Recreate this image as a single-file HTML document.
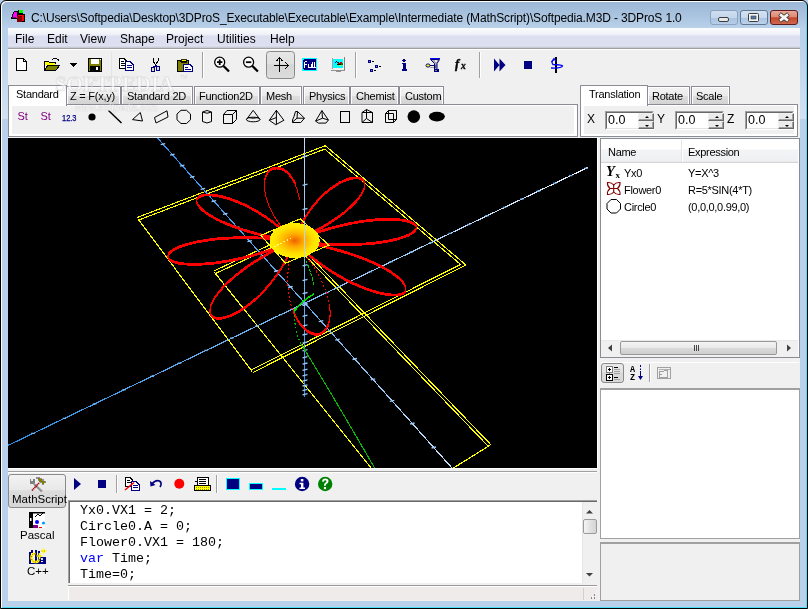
<!DOCTYPE html>
<html><head><meta charset="utf-8">
<style>
*{margin:0;padding:0;box-sizing:border-box}
html,body{width:808px;height:609px;overflow:hidden;background:#b9d1ea}
body{position:relative;will-change:transform;font-family:"Liberation Sans",sans-serif;font-size:11px;color:#000}
.a{position:absolute}
.t{position:absolute;white-space:nowrap;line-height:1}
#frame{left:0;top:0;width:808px;height:609px;border:1px solid #000;border-radius:6px 6px 0 0;box-shadow:inset 1px 1px 0 #fff,inset -1px -1px 0 #48dff7;
 background:linear-gradient(#9bb7d6 0px,#a9c3df 14px,#b9d1ea 27px,#b9d1ea 118px,#b9d1ea 609px)}
#content{left:8px;top:28px;width:792px;height:573px;background:#f0f0f0}
#menu{left:8px;top:28px;width:792px;height:20px;background:linear-gradient(#fdfdfe 0px,#eceff7 7px,#dcdfef 8px,#dcdfef 17px,#e3e6f3 18px,#c8cad6 19px)}
.menut{font-size:12px;top:33px}
.tab{position:absolute;border:1px solid #898c95;border-bottom:none;background:linear-gradient(#f3f3f3,#ececec 50%,#dfdfdf 51%,#d3d3d3);border-radius:1px 1px 0 0;box-shadow:inset 1px 1px 0 #fff,inset -1px 0 0 #fff}
.tab.act{background:#fff;box-shadow:none}
.tabt{position:absolute;white-space:nowrap;line-height:1;font-size:11px;letter-spacing:-0.25px}
.panel{position:absolute;border:1px solid #898c95;background:#fff}
</style></head>
<body>
<div id="frame" class="a"></div>
<div class="a" style="left:2px;top:40px;width:6px;height:79px;background:linear-gradient(#b9d1ea,#c8dbf0 60%,#d2e2f3)"></div>
<div class="a" style="left:800px;top:40px;width:6px;height:79px;background:linear-gradient(#b9d1ea,#c8dbf0 60%,#d2e2f3)"></div>
<div id="content" class="a"></div>
<div id="menu" class="a"></div>
<div class="a" style="left:8px;top:48px;width:792px;height:1px;background:#a0a0a0"></div>
<div class="a" style="left:8px;top:49px;width:792px;height:1px;background:#fff"></div>

<!-- title -->
<div class="t" id="title" style="left:31px;top:12px;font-size:12px;letter-spacing:-0.135px">C:\Users\Softpedia\Desktop\3DProS_Executable\Executable\Example\Intermediate (MathScript)\Softpedia.M3D - 3DProS 1.0</div>

<!-- menu -->
<div class="t menut" style="left:15px">File</div>
<div class="t menut" style="left:47px">Edit</div>
<div class="t menut" style="left:80px">View</div>
<div class="t menut" style="left:120px">Shape</div>
<div class="t menut" style="left:166px">Project</div>
<div class="t menut" style="left:217px">Utilities</div>
<div class="t menut" style="left:270px">Help</div>

<!-- left tab control -->
<div class="panel" style="left:8px;top:104px;width:570px;height:33px"></div>
<div class="a" style="left:12px;top:106px;width:562px;height:28px;background:#f0f0f0"></div>
<div class="tab" style="left:66px;top:86px;width:55px;height:18px"></div>
<div class="tab" style="left:121px;top:86px;width:72px;height:18px"></div>
<div class="tab" style="left:194px;top:86px;width:66px;height:18px"></div>
<div class="tab" style="left:260px;top:86px;width:42px;height:18px"></div>
<div class="tab" style="left:303px;top:86px;width:47px;height:18px"></div>
<div class="tab" style="left:350px;top:86px;width:49px;height:18px"></div>
<div class="tab" style="left:399px;top:86px;width:45px;height:18px"></div>
<div class="tab act" style="left:8px;top:85px;width:59px;height:21px"></div>
<div class="tabt" style="left:16px;top:89px">Standard</div>
<div class="tabt" style="left:70px;top:91px">Z = F(x,y)</div>
<div class="tabt" style="left:127px;top:91px">Standard 2D</div>
<div class="tabt" style="left:199px;top:91px">Function2D</div>
<div class="tabt" style="left:266px;top:91px">Mesh</div>
<div class="tabt" style="left:309px;top:91px">Physics</div>
<div class="tabt" style="left:356px;top:91px">Chemist</div>
<div class="tabt" style="left:405px;top:91px">Custom</div>

<!-- right tab control -->
<div class="panel" style="left:580px;top:104px;width:218px;height:33px"></div>
<div class="a" style="left:584px;top:106px;width:210px;height:28px;background:#f0f0f0"></div>
<div class="tab" style="left:647px;top:86px;width:43px;height:18px"></div>
<div class="tab" style="left:691px;top:86px;width:39px;height:18px"></div>
<div class="tab act" style="left:580px;top:85px;width:68px;height:21px"></div>
<div class="tabt" style="left:589px;top:89px">Translation</div>
<div class="tabt" style="left:652px;top:91px">Rotate</div>
<div class="tabt" style="left:696px;top:91px">Scale</div>

<!-- 3D view -->
<div class="a" id="view" style="left:8px;top:138px;width:589px;height:330px;background:#000"></div>

<!-- right list -->
<div class="panel" style="left:600px;top:138px;width:200px;height:220px"></div>

<!--SCENE--><svg class="a" style="left:8px;top:138px" width="589" height="330" viewBox="0 0 589 330" shape-rendering="crispEdges"><defs>
<linearGradient id="gAx1" gradientUnits="userSpaceOnUse" x1="149" y1="0" x2="444" y2="330"><stop offset="0" stop-color="#2f8ef0"/><stop offset="0.5" stop-color="#6aaae8"/><stop offset="1" stop-color="#c8e0f8"/></linearGradient>
<linearGradient id="gAx2" gradientUnits="userSpaceOnUse" x1="0" y1="307" x2="580" y2="29"><stop offset="0" stop-color="#2a8ee8"/><stop offset="0.5" stop-color="#78b4ec"/><stop offset="1" stop-color="#e8f2ff"/></linearGradient>
<linearGradient id="gAx3" gradientUnits="userSpaceOnUse" x1="0" y1="0" x2="0" y2="258"><stop offset="0" stop-color="#c0dcf8"/><stop offset="1" stop-color="#2f8ef0"/></linearGradient>
<radialGradient id="gBall" cx="0.5" cy="0.5" r="0.5"><stop offset="0" stop-color="#f06000"/><stop offset="0.35" stop-color="#ffa800"/><stop offset="0.75" stop-color="#ffe000"/><stop offset="1" stop-color="#fff000"/></radialGradient>
</defs>
<path d="M129.3,79.4 L317.3,7.7 L457.9,127.0 L244.7,234.6" fill="none" stroke="#ffff00" stroke-width="1.1" />
<path d="M130.3,82.2 L316.7,11.1 L452.5,126.4 L243.3,232.0" fill="none" stroke="#ffff00" stroke-width="1.1" />
<line x1="244.0" y1="233.3" x2="129.8" y2="80.8" stroke="#ffff00" stroke-width="1.2" />
<path d="M205.9,132.9 L273.4,101.6" fill="none" stroke="#ffff00" stroke-width="1.1" />
<path d="M207.1,135.7 L274.6,104.4" fill="none" stroke="#ffff00" stroke-width="1.1" />
<path d="M293.1,109.0 L482.7,306.5" fill="none" stroke="#ffff00" stroke-width="1.1" />
<path d="M290.9,111.0 L480.5,308.5" fill="none" stroke="#ffff00" stroke-width="1.1" />
<line x1="481.6" y1="307.5" x2="445.4" y2="330.0" stroke="#ffff00" stroke-width="1.2" />
<line x1="206.5" y1="134.3" x2="363.1" y2="330.0" stroke="#ffff00" stroke-width="1.2" />
<line x1="149.5" y1="0.0" x2="444.0" y2="330.0" stroke="url(#gAx1)" stroke-width="1.2" />
<line x1="0.0" y1="307.4" x2="579.7" y2="29.5" stroke="url(#gAx2)" stroke-width="1.2" />
<line x1="296.5" y1="0.0" x2="296.5" y2="258.5" stroke="url(#gAx3)" stroke-width="1.2" />
<g shape-rendering="auto"><path d="M152.7 6.6 L157.2 5.6" stroke="#9cc8f4" stroke-width="1.3"/><path d="M162.1 17.1 L166.6 16.1" stroke="#9cc8f4" stroke-width="1.3"/><path d="M171.9 28.1 L176.4 27.1" stroke="#9cc8f4" stroke-width="1.3"/><path d="M182.0 39.4 L186.5 38.4" stroke="#9cc8f4" stroke-width="1.3"/><path d="M192.6 51.3 L197.1 50.3" stroke="#9cc8f4" stroke-width="1.3"/><path d="M203.6 63.6 L208.1 62.6" stroke="#9cc8f4" stroke-width="1.3"/><path d="M215.0 76.4 L219.5 75.4" stroke="#9cc8f4" stroke-width="1.3"/><path d="M226.9 89.8 L231.4 88.8" stroke="#9cc8f4" stroke-width="1.3"/><path d="M239.4 103.7 L243.9 102.7" stroke="#9cc8f4" stroke-width="1.3"/><path d="M252.4 118.3 L256.9 117.3" stroke="#9cc8f4" stroke-width="1.3"/><path d="M266.0 133.5 L270.5 132.5" stroke="#9cc8f4" stroke-width="1.3"/><path d="M280.2 149.5 L284.7 148.5" stroke="#9cc8f4" stroke-width="1.3"/><path d="M295.1 166.2 L299.6 165.2" stroke="#9cc8f4" stroke-width="1.3"/><path d="M310.8 183.7 L315.3 182.7" stroke="#9cc8f4" stroke-width="1.3"/><path d="M327.2 202.1 L331.7 201.1" stroke="#9cc8f4" stroke-width="1.3"/><path d="M344.5 221.5 L349.0 220.5" stroke="#9cc8f4" stroke-width="1.3"/><path d="M362.7 241.9 L367.2 240.9" stroke="#9cc8f4" stroke-width="1.3"/><path d="M381.8 263.3 L386.3 262.3" stroke="#9cc8f4" stroke-width="1.3"/><path d="M402.1 286.0 L406.6 285.0" stroke="#9cc8f4" stroke-width="1.3"/><path d="M423.5 310.0 L428.0 309.0" stroke="#9cc8f4" stroke-width="1.3"/><path d="M294.5 19.0 L299.5 17.8" stroke="#9cc8f4" stroke-width="1.3"/><path d="M294.5 47.3 L299.5 46.1" stroke="#9cc8f4" stroke-width="1.3"/><path d="M294.5 71.7 L299.5 70.5" stroke="#9cc8f4" stroke-width="1.3"/><path d="M294.5 92.9 L299.5 91.7" stroke="#9cc8f4" stroke-width="1.3"/><path d="M294.5 111.5 L299.5 110.3" stroke="#9cc8f4" stroke-width="1.3"/><path d="M294.5 127.9 L299.5 126.7" stroke="#9cc8f4" stroke-width="1.3"/><path d="M294.5 142.6 L299.5 141.4" stroke="#9cc8f4" stroke-width="1.3"/><path d="M294.5 155.7 L299.5 154.5" stroke="#9cc8f4" stroke-width="1.3"/><path d="M294.5 167.6 L299.5 166.4" stroke="#9cc8f4" stroke-width="1.3"/><path d="M294.5 178.3 L299.5 177.1" stroke="#9cc8f4" stroke-width="1.3"/><path d="M294.5 188.1 L299.5 186.9" stroke="#9cc8f4" stroke-width="1.3"/><path d="M294.5 197.0 L299.5 195.8" stroke="#9cc8f4" stroke-width="1.3"/><path d="M294.5 205.2 L299.5 204.0" stroke="#9cc8f4" stroke-width="1.3"/><path d="M294.5 212.8 L299.5 211.6" stroke="#9cc8f4" stroke-width="1.3"/><path d="M294.5 219.8 L299.5 218.6" stroke="#9cc8f4" stroke-width="1.3"/><path d="M294.5 226.2 L299.5 225.0" stroke="#9cc8f4" stroke-width="1.3"/><path d="M294.5 232.3 L299.5 231.1" stroke="#9cc8f4" stroke-width="1.3"/><path d="M294.5 237.9 L299.5 236.7" stroke="#9cc8f4" stroke-width="1.3"/><path d="M294.5 243.1 L299.5 241.9" stroke="#9cc8f4" stroke-width="1.3"/><path d="M294.5 248.0 L299.5 246.8" stroke="#9cc8f4" stroke-width="1.3"/><path d="M294.5 252.6 L299.5 251.4" stroke="#9cc8f4" stroke-width="1.3"/><path d="M294.5 256.9 L299.5 255.7" stroke="#9cc8f4" stroke-width="1.3"/><path d="M23.2 295.4 L26.8 295.4" stroke="#7ab8f0" stroke-width="1.3"/><path d="M54.6 280.4 L58.1 280.4" stroke="#7ab8f0" stroke-width="1.3"/><path d="M84.9 265.9 L88.4 265.9" stroke="#7ab8f0" stroke-width="1.3"/><path d="M114.2 251.8 L117.7 251.8" stroke="#7ab8f0" stroke-width="1.3"/><path d="M142.5 238.3 L146.0 238.3" stroke="#7ab8f0" stroke-width="1.3"/><path d="M169.8 225.1 L173.3 225.1" stroke="#7ab8f0" stroke-width="1.3"/><path d="M196.3 212.4 L199.8 212.4" stroke="#7ab8f0" stroke-width="1.3"/><path d="M222.0 200.1 L225.5 200.1" stroke="#7ab8f0" stroke-width="1.3"/><path d="M246.9 188.2 L250.4 188.2" stroke="#7ab8f0" stroke-width="1.3"/><path d="M271.0 176.6 L274.5 176.6" stroke="#7ab8f0" stroke-width="1.3"/><path d="M294.4 165.4 L297.9 165.4" stroke="#7ab8f0" stroke-width="1.3"/><path d="M317.1 154.5 L320.6 154.5" stroke="#7ab8f0" stroke-width="1.3"/><path d="M339.1 144.0 L342.6 144.0" stroke="#7ab8f0" stroke-width="1.3"/><path d="M360.6 133.7 L364.1 133.7" stroke="#7ab8f0" stroke-width="1.3"/><path d="M381.4 123.7 L384.9 123.7" stroke="#7ab8f0" stroke-width="1.3"/><path d="M401.6 114.0 L405.1 114.0" stroke="#7ab8f0" stroke-width="1.3"/><path d="M421.2 104.6 L424.7 104.6" stroke="#7ab8f0" stroke-width="1.3"/><path d="M440.4 95.4 L443.9 95.4" stroke="#7ab8f0" stroke-width="1.3"/><path d="M459.0 86.5 L462.5 86.5" stroke="#7ab8f0" stroke-width="1.3"/><path d="M477.1 77.8 L480.6 77.8" stroke="#7ab8f0" stroke-width="1.3"/><path d="M494.8 69.4 L498.3 69.4" stroke="#7ab8f0" stroke-width="1.3"/><path d="M512.0 61.1 L515.5 61.1" stroke="#7ab8f0" stroke-width="1.3"/><path d="M528.7 53.1 L532.2 53.1" stroke="#7ab8f0" stroke-width="1.3"/><path d="M545.0 45.3 L548.5 45.3" stroke="#7ab8f0" stroke-width="1.3"/><path d="M561.0 37.6 L564.5 37.6" stroke="#7ab8f0" stroke-width="1.3"/><path d="M576.5 30.2 L580.0 30.2" stroke="#7ab8f0" stroke-width="1.3"/></g>
<path d="M286.2,104.0 L284.9,102.7 L283.6,101.3 L282.3,99.9 L281.1,98.5 L279.9,97.1 L278.7,95.7 L277.6,94.3 L276.5,93.0 L275.4,91.6 L274.3,90.2 L273.3,88.8 L272.3,87.5 L271.3,86.1 L270.4,84.7 L269.5,83.4 L268.6,82.0 L267.8,80.7 L267.0,79.4 L266.2,78.1 L265.5,76.7 L264.7,75.4 L264.1,74.1 L263.4,72.9 L262.8,71.6 L262.2,70.3 L261.6,69.1 L261.1,67.9 L260.6,66.6 L260.1,65.4 L259.7,64.2 L259.2,63.1 L258.9,61.9 L258.5,60.8 L258.2,59.6 L257.9,58.5 L257.6,57.4 L257.4,56.4 L257.2,55.3 L257.0,54.3 L256.8,53.2 L256.7,52.2 L256.6,51.3 L256.5,50.3 L256.4,49.3 L256.4,48.4 L256.4,47.5 L256.4,46.6 L256.5,45.8 L256.5,44.9 L256.6,44.1 L256.7,43.3 L256.9,42.6 L257.0,41.8 L257.2,41.1 L257.4,40.4 L257.6,39.7 L257.9,39.1 L258.1,38.4 L258.4,37.8 L258.7,37.2 L259.0,36.7 L259.4,36.2 L259.7,35.6 L260.1,35.2 L260.5,34.7 L260.9,34.3 L261.3,33.9 L261.7,33.5 L262.1,33.1 L262.6,32.8 L263.0,32.5 L263.5,32.2 L264.0,32.0 L264.5,31.8 L265.0,31.6 L265.5,31.4 L266.0,31.3 L266.6,31.1 L267.1,31.1 L267.7,31.0 L268.2,31.0 L268.8,30.9 L269.3,31.0 L269.9,31.0 L270.5,31.1 L271.1,31.2 L271.6,31.3 L272.2,31.5 L272.8,31.7 L273.4,31.9 L274.0,32.1 L274.6,32.4 L275.2,32.7 L275.8,33.0 L276.3,33.3 L276.9,33.7 L277.5,34.1 L278.1,34.5 L278.7,35.0 L279.2,35.5 L279.8,36.0 L280.3,36.5 L280.9,37.1 L281.4,37.7 L282.0,38.3 L282.5,38.9 L283.0,39.6 L283.5,40.3 L284.0,41.0 L284.5,41.8 L285.0,42.5 L285.5,43.3 L285.9,44.2 L286.4,45.0 L286.8,45.9 L287.2,46.8 L287.6,47.7 L288.0,48.6 L288.4,49.6 L288.7,50.6 L289.1,51.6 L289.4,52.7 L289.7,53.7 L290.0,54.8 L290.3,55.9 L290.5,57.0 L290.8,58.2 L291.0,59.4 L291.2,60.6 L291.4,61.8" fill="none" stroke="#ff0000" stroke-width="1.0" stroke-linejoin="round"/>
<path d="M290.4,88.3 L290.1,89.8 L289.7,91.4 L289.4,92.9 L289.0,94.5 L288.6,96.1 L288.2,97.6 L287.7,99.2 L287.2,100.8 L286.7,102.4 L286.2,104.0" fill="none" stroke="#ff0000" stroke-width="1.0" stroke-linejoin="round"/>
<path d="M256.5,49.4 L256.4,48.4 L256.4,47.5 L256.4,46.6 L256.4,45.7 L256.5,44.9 L256.5,44.0 L256.6,43.2 L256.7,42.4 L256.9,41.7 L257.0,40.9 L257.2,40.2 L257.4,39.5 L257.6,38.8 L257.9,38.2 L258.1,37.5 L258.4,36.9 L258.7,36.3 L259.0,35.8 L259.4,35.3 L259.7,34.7 L260.1,34.3 L260.5,33.8 L260.9,33.4 L261.3,33.0 L261.7,32.6 L262.1,32.2 L262.6,31.9 L263.0,31.6 L263.5,31.3 L264.0,31.1 L264.5,30.9 L265.0,30.7 L265.5,30.5 L266.0,30.4 L266.6,30.2 L267.1,30.2 L267.7,30.1 L268.2,30.1 L268.8,30.0 L269.3,30.1 L269.9,30.1 L270.5,30.2 L271.1,30.3 L271.6,30.4 L272.2,30.6 L272.8,30.8 L273.4,31.0 L274.0,31.2 L274.6,31.5 L275.2,31.8 L275.8,32.1 L276.3,32.4 L276.9,32.8 L277.5,33.2 L278.1,33.6 L278.7,34.1 L279.2,34.6 L279.8,35.1 L280.3,35.6 L280.9,36.2 L281.4,36.8 L282.0,37.4 L282.5,38.0 L283.0,38.7 L283.5,39.4 L284.0,40.1 L284.5,40.9 L285.0,41.6 L285.5,42.4 L285.9,43.3 L286.4,44.1 L286.8,45.0 L287.2,45.9" fill="none" stroke="#ff0000" stroke-width="1.0" stroke-linejoin="round"/>
<path d="M256.5,48.5 L256.4,47.5 L256.4,46.6 L256.4,45.7 L256.4,44.8 L256.5,44.0 L256.5,43.1 L256.6,42.3 L256.7,41.5 L256.9,40.8 L257.0,40.0 L257.2,39.3 L257.4,38.6 L257.6,37.9 L257.9,37.3 L258.1,36.6 L258.4,36.0 L258.7,35.4 L259.0,34.9 L259.4,34.4 L259.7,33.8 L260.1,33.4 L260.5,32.9 L260.9,32.5 L261.3,32.1 L261.7,31.7 L262.1,31.3 L262.6,31.0 L263.0,30.7 L263.5,30.4 L264.0,30.2 L264.5,30.0 L265.0,29.8 L265.5,29.6 L266.0,29.5 L266.6,29.3 L267.1,29.3 L267.7,29.2 L268.2,29.2 L268.8,29.1 L269.3,29.2 L269.9,29.2 L270.5,29.3 L271.1,29.4 L271.6,29.5 L272.2,29.7 L272.8,29.9 L273.4,30.1 L274.0,30.3 L274.6,30.6 L275.2,30.9 L275.8,31.2 L276.3,31.5 L276.9,31.9 L277.5,32.3 L278.1,32.7 L278.7,33.2 L279.2,33.7 L279.8,34.2 L280.3,34.7 L280.9,35.3 L281.4,35.9 L282.0,36.5 L282.5,37.1 L283.0,37.8 L283.5,38.5 L284.0,39.2 L284.5,40.0 L285.0,40.7 L285.5,41.5 L285.9,42.4 L286.4,43.2 L286.8,44.1 L287.2,45.0" fill="none" stroke="#ff0000" stroke-width="1.0" stroke-linejoin="round"/>
<path d="M286.2,104.0 L286.7,102.4 L287.3,100.8 L287.9,99.3 L288.5,97.7 L289.2,96.1 L289.8,94.6 L290.5,93.1 L291.2,91.6 L292.0,90.1 L292.7,88.6 L293.4,87.1 L294.2,85.7 L295.0,84.3 L295.8,82.8 L296.6,81.5 L297.4,80.1 L298.3,78.7 L299.1,77.4 L300.0,76.1 L300.9,74.8 L301.8,73.5 L302.7,72.3 L303.6,71.0 L304.5,69.8 L305.5,68.6 L306.4,67.5 L307.3,66.3 L308.3,65.2 L309.3,64.1 L310.2,63.0 L311.2,62.0 L312.2,61.0 L313.2,60.0 L314.2,59.0 L315.1,58.0 L316.1,57.1 L317.1,56.2 L318.1,55.3 L319.1,54.5 L320.1,53.7 L321.1,52.8 L322.1,52.1 L323.1,51.3 L324.1,50.6 L325.1,49.9 L326.1,49.2 L327.0,48.6 L328.0,47.9 L329.0,47.3 L329.9,46.8 L330.9,46.2 L331.8,45.7 L332.8,45.2 L333.7,44.8 L334.6,44.3 L335.5,43.9 L336.4,43.5 L337.3,43.1 L338.2,42.8 L339.0,42.5 L339.9,42.2 L340.7,42.0 L341.6,41.7 L342.4,41.5 L343.1,41.3 L343.9,41.2 L344.7,41.0 L345.4,40.9 L346.1,40.9 L346.8,40.8 L347.5,40.8 L348.2,40.8 L348.8,40.8 L349.4,40.8 L350.0,40.9 L350.6,41.0 L351.2,41.1 L351.7,41.3 L352.2,41.4 L352.7,41.6 L353.2,41.8 L353.6,42.1 L354.0,42.3 L354.4,42.6 L354.7,42.9 L355.1,43.3 L355.4,43.6 L355.6,44.0 L355.9,44.4 L356.1,44.8 L356.2,45.3 L356.4,45.7 L356.5,46.2 L356.6,46.7 L356.7,47.2 L356.7,47.8 L356.7,48.3 L356.6,48.9 L356.5,49.5 L356.4,50.1 L356.3,50.8 L356.1,51.4 L355.9,52.1 L355.6,52.8 L355.4,53.5 L355.0,54.2 L354.7,55.0 L354.3,55.7 L353.8,56.5 L353.4,57.3 L352.9,58.1 L352.3,58.9 L351.7,59.7 L351.1,60.6 L350.5,61.4 L349.8,62.3 L349.0,63.2 L348.3,64.1 L347.5,65.0 L346.6,65.9 L345.7,66.8 L344.8,67.7 L343.8,68.7 L342.8,69.6 L341.8,70.6 L340.7,71.5 L339.6,72.5 L338.5,73.5 L337.3,74.5 L336.1,75.5 L334.8,76.5 L333.5,77.5 L332.1,78.5 L330.8,79.5 L329.4,80.5 L327.9,81.5 L326.4,82.5 L324.9,83.5 L323.4,84.5 L321.8,85.6 L320.2,86.6 L318.5,87.6 L316.9,88.6 L315.1,89.6 L313.4,90.6 L311.6,91.6 L309.8,92.6 L308.0,93.6 L306.1,94.6 L304.2,95.6 L302.3,96.5 L300.4,97.5 L298.4,98.5 L296.4,99.4 L294.4,100.4 L292.4,101.3 L290.3,102.2 L288.3,103.1 L286.2,104.0" fill="none" stroke="#ff0000" stroke-width="1.0" stroke-linejoin="round"/>
<path d="M286.2,103.1 L286.7,101.5 L287.3,99.9 L287.9,98.4 L288.5,96.8 L289.2,95.2 L289.8,93.7 L290.5,92.2 L291.2,90.7 L292.0,89.2 L292.7,87.7 L293.4,86.2 L294.2,84.8 L295.0,83.4 L295.8,81.9 L296.6,80.6 L297.4,79.2 L298.3,77.8 L299.1,76.5 L300.0,75.2 L300.9,73.9 L301.8,72.6 L302.7,71.4 L303.6,70.1 L304.5,68.9 L305.5,67.7 L306.4,66.6 L307.3,65.4 L308.3,64.3 L309.3,63.2 L310.2,62.1 L311.2,61.1 L312.2,60.1 L313.2,59.1 L314.2,58.1 L315.1,57.1 L316.1,56.2 L317.1,55.3 L318.1,54.4 L319.1,53.6 L320.1,52.8 L321.1,51.9 L322.1,51.2 L323.1,50.4 L324.1,49.7 L325.1,49.0 L326.1,48.3 L327.0,47.7 L328.0,47.0 L329.0,46.4 L329.9,45.9 L330.9,45.3 L331.8,44.8 L332.8,44.3 L333.7,43.9 L334.6,43.4 L335.5,43.0 L336.4,42.6 L337.3,42.2 L338.2,41.9 L339.0,41.6 L339.9,41.3 L340.7,41.1 L341.6,40.8 L342.4,40.6 L343.1,40.4 L343.9,40.3 L344.7,40.1 L345.4,40.0 L346.1,40.0 L346.8,39.9 L347.5,39.9 L348.2,39.9 L348.8,39.9 L349.4,39.9 L350.0,40.0 L350.6,40.1 L351.2,40.2 L351.7,40.4 L352.2,40.5 L352.7,40.7 L353.2,40.9 L353.6,41.2 L354.0,41.4 L354.4,41.7 L354.7,42.0 L355.1,42.4 L355.4,42.7 L355.6,43.1 L355.9,43.5 L356.1,43.9 L356.2,44.4 L356.4,44.8 L356.5,45.3 L356.6,45.8 L356.7,46.3 L356.7,46.9 L356.7,47.4 L356.6,48.0 L356.5,48.6 L356.4,49.2 L356.3,49.9 L356.1,50.5 L355.9,51.2 L355.6,51.9 L355.4,52.6 L355.0,53.3 L354.7,54.1 L354.3,54.8 L353.8,55.6 L353.4,56.4 L352.9,57.2 L352.3,58.0 L351.7,58.8 L351.1,59.7 L350.5,60.5 L349.8,61.4 L349.0,62.3 L348.3,63.2 L347.5,64.1 L346.6,65.0 L345.7,65.9 L344.8,66.8 L343.8,67.8 L342.8,68.7 L341.8,69.7 L340.7,70.6 L339.6,71.6 L338.5,72.6 L337.3,73.6 L336.1,74.6 L334.8,75.6 L333.5,76.6 L332.1,77.6 L330.8,78.6 L329.4,79.6 L327.9,80.6 L326.4,81.6 L324.9,82.6 L323.4,83.6 L321.8,84.7 L320.2,85.7 L318.5,86.7 L316.9,87.7 L315.1,88.7 L313.4,89.7 L311.6,90.7 L309.8,91.7 L308.0,92.7 L306.1,93.7 L304.2,94.7 L302.3,95.6 L300.4,96.6 L298.4,97.6 L296.4,98.5 L294.4,99.5 L292.4,100.4 L290.3,101.3 L288.3,102.2 L286.2,103.1" fill="none" stroke="#ff0000" stroke-width="1.0" stroke-linejoin="round"/>
<path d="M286.2,102.2 L286.7,100.6 L287.3,99.0 L287.9,97.5 L288.5,95.9 L289.2,94.3 L289.8,92.8 L290.5,91.3 L291.2,89.8 L292.0,88.3 L292.7,86.8 L293.4,85.3 L294.2,83.9 L295.0,82.5 L295.8,81.0 L296.6,79.7 L297.4,78.3 L298.3,76.9 L299.1,75.6 L300.0,74.3 L300.9,73.0 L301.8,71.7 L302.7,70.5 L303.6,69.2 L304.5,68.0 L305.5,66.8 L306.4,65.7 L307.3,64.5 L308.3,63.4 L309.3,62.3 L310.2,61.2 L311.2,60.2 L312.2,59.2 L313.2,58.2 L314.2,57.2 L315.1,56.2 L316.1,55.3 L317.1,54.4 L318.1,53.5 L319.1,52.7 L320.1,51.9 L321.1,51.0 L322.1,50.3 L323.1,49.5 L324.1,48.8 L325.1,48.1 L326.1,47.4 L327.0,46.8 L328.0,46.1 L329.0,45.5 L329.9,45.0 L330.9,44.4 L331.8,43.9 L332.8,43.4 L333.7,43.0 L334.6,42.5 L335.5,42.1 L336.4,41.7 L337.3,41.3 L338.2,41.0 L339.0,40.7 L339.9,40.4 L340.7,40.2 L341.6,39.9 L342.4,39.7 L343.1,39.5 L343.9,39.4 L344.7,39.2 L345.4,39.1 L346.1,39.1 L346.8,39.0 L347.5,39.0 L348.2,39.0 L348.8,39.0 L349.4,39.0 L350.0,39.1 L350.6,39.2 L351.2,39.3 L351.7,39.5 L352.2,39.6 L352.7,39.8 L353.2,40.0 L353.6,40.3 L354.0,40.5 L354.4,40.8 L354.7,41.1 L355.1,41.5 L355.4,41.8 L355.6,42.2 L355.9,42.6 L356.1,43.0 L356.2,43.5 L356.4,43.9 L356.5,44.4 L356.6,44.9 L356.7,45.4 L356.7,46.0 L356.7,46.5 L356.6,47.1 L356.5,47.7 L356.4,48.3 L356.3,49.0 L356.1,49.6 L355.9,50.3 L355.6,51.0 L355.4,51.7 L355.0,52.4 L354.7,53.2 L354.3,53.9 L353.8,54.7 L353.4,55.5 L352.9,56.3 L352.3,57.1 L351.7,57.9 L351.1,58.8 L350.5,59.6 L349.8,60.5 L349.0,61.4 L348.3,62.3 L347.5,63.2 L346.6,64.1 L345.7,65.0 L344.8,65.9 L343.8,66.9 L342.8,67.8 L341.8,68.8 L340.7,69.7 L339.6,70.7 L338.5,71.7 L337.3,72.7 L336.1,73.7 L334.8,74.7 L333.5,75.7 L332.1,76.7 L330.8,77.7 L329.4,78.7 L327.9,79.7 L326.4,80.7 L324.9,81.7 L323.4,82.7 L321.8,83.8 L320.2,84.8 L318.5,85.8 L316.9,86.8 L315.1,87.8 L313.4,88.8 L311.6,89.8 L309.8,90.8 L308.0,91.8 L306.1,92.8 L304.2,93.8 L302.3,94.7 L300.4,95.7 L298.4,96.7 L296.4,97.6 L294.4,98.6 L292.4,99.5 L290.3,100.4 L288.3,101.3 L286.2,102.2" fill="none" stroke="#ff0000" stroke-width="1.0" stroke-linejoin="round"/>
<path d="M286.2,104.0 L288.3,103.2 L290.4,102.3 L292.5,101.4 L294.6,100.6 L296.8,99.8 L298.9,99.0 L301.0,98.2 L303.2,97.4 L305.3,96.6 L307.4,95.9 L309.6,95.2 L311.7,94.5 L313.9,93.8 L316.0,93.2 L318.1,92.5 L320.2,91.9 L322.4,91.3 L324.5,90.7 L326.6,90.1 L328.6,89.6 L330.7,89.1 L332.8,88.6 L334.9,88.1 L336.9,87.6 L338.9,87.2 L341.0,86.7 L343.0,86.3 L345.0,85.9 L346.9,85.6 L348.9,85.2 L350.8,84.9 L352.8,84.6 L354.7,84.3 L356.5,84.0 L358.4,83.8 L360.2,83.5 L362.0,83.3 L363.8,83.1 L365.6,82.9 L367.3,82.8 L369.1,82.6 L370.7,82.5 L372.4,82.4 L374.0,82.3 L375.6,82.3 L377.2,82.2 L378.8,82.2 L380.3,82.2 L381.7,82.2 L383.2,82.2 L384.6,82.2 L386.0,82.3 L387.3,82.3 L388.6,82.4 L389.9,82.5 L391.1,82.7 L392.3,82.8 L393.5,82.9 L394.6,83.1 L395.7,83.3 L396.7,83.5 L397.7,83.7 L398.7,83.9 L399.6,84.1 L400.5,84.4 L401.3,84.6 L402.1,84.9 L402.8,85.2 L403.5,85.5 L404.2,85.8 L404.8,86.1 L405.3,86.4 L405.8,86.7 L406.3,87.1 L406.7,87.4 L407.1,87.8 L407.4,88.1 L407.7,88.5 L407.9,88.9 L408.1,89.3 L408.2,89.7 L408.3,90.1 L408.3,90.5 L408.3,90.9 L408.2,91.3 L408.1,91.7 L407.9,92.2 L407.7,92.6 L407.4,93.0 L407.0,93.4 L406.7,93.9 L406.2,94.3 L405.7,94.7 L405.2,95.2 L404.6,95.6 L404.0,96.0 L403.3,96.5 L402.5,96.9 L401.8,97.3 L400.9,97.8 L400.0,98.2 L399.1,98.6 L398.1,99.0 L397.1,99.4 L396.0,99.8 L394.8,100.2 L393.6,100.6 L392.4,101.0 L391.1,101.4 L389.8,101.8 L388.4,102.1 L387.0,102.5 L385.6,102.8 L384.0,103.2 L382.5,103.5 L380.9,103.8 L379.3,104.1 L377.6,104.4 L375.9,104.7 L374.1,105.0 L372.3,105.2 L370.5,105.5 L368.6,105.7 L366.7,106.0 L364.8,106.2 L362.8,106.4 L360.8,106.6 L358.8,106.7 L356.7,106.9 L354.6,107.0 L352.5,107.1 L350.3,107.3 L348.1,107.3 L345.9,107.4 L343.7,107.5 L341.4,107.5 L339.1,107.6 L336.8,107.6 L334.5,107.6 L332.2,107.6 L329.8,107.5 L327.5,107.5 L325.1,107.4 L322.7,107.3 L320.3,107.2 L317.9,107.1 L315.5,107.0 L313.0,106.8 L310.6,106.6 L308.1,106.5 L305.7,106.3 L303.2,106.0 L300.8,105.8 L298.3,105.5 L295.9,105.3 L293.5,105.0 L291.0,104.7 L288.6,104.4 L286.2,104.0" fill="none" stroke="#ff0000" stroke-width="1.0" stroke-linejoin="round"/>
<path d="M286.2,103.1 L288.3,102.3 L290.4,101.4 L292.5,100.5 L294.6,99.7 L296.8,98.9 L298.9,98.1 L301.0,97.3 L303.2,96.5 L305.3,95.7 L307.4,95.0 L309.6,94.3 L311.7,93.6 L313.9,92.9 L316.0,92.3 L318.1,91.6 L320.2,91.0 L322.4,90.4 L324.5,89.8 L326.6,89.2 L328.6,88.7 L330.7,88.2 L332.8,87.7 L334.9,87.2 L336.9,86.7 L338.9,86.3 L341.0,85.8 L343.0,85.4 L345.0,85.0 L346.9,84.7 L348.9,84.3 L350.8,84.0 L352.8,83.7 L354.7,83.4 L356.5,83.1 L358.4,82.9 L360.2,82.6 L362.0,82.4 L363.8,82.2 L365.6,82.0 L367.3,81.9 L369.1,81.7 L370.7,81.6 L372.4,81.5 L374.0,81.4 L375.6,81.4 L377.2,81.3 L378.8,81.3 L380.3,81.3 L381.7,81.3 L383.2,81.3 L384.6,81.3 L386.0,81.4 L387.3,81.4 L388.6,81.5 L389.9,81.6 L391.1,81.8 L392.3,81.9 L393.5,82.0 L394.6,82.2 L395.7,82.4 L396.7,82.6 L397.7,82.8 L398.7,83.0 L399.6,83.2 L400.5,83.5 L401.3,83.7 L402.1,84.0 L402.8,84.3 L403.5,84.6 L404.2,84.9 L404.8,85.2 L405.3,85.5 L405.8,85.8 L406.3,86.2 L406.7,86.5 L407.1,86.9 L407.4,87.2 L407.7,87.6 L407.9,88.0 L408.1,88.4 L408.2,88.8 L408.3,89.2 L408.3,89.6 L408.3,90.0 L408.2,90.4 L408.1,90.8 L407.9,91.3 L407.7,91.7 L407.4,92.1 L407.0,92.5 L406.7,93.0 L406.2,93.4 L405.7,93.8 L405.2,94.3 L404.6,94.7 L404.0,95.1 L403.3,95.6 L402.5,96.0 L401.8,96.4 L400.9,96.9 L400.0,97.3 L399.1,97.7 L398.1,98.1 L397.1,98.5 L396.0,98.9 L394.8,99.3 L393.6,99.7 L392.4,100.1 L391.1,100.5 L389.8,100.9 L388.4,101.2 L387.0,101.6 L385.6,101.9 L384.0,102.3 L382.5,102.6 L380.9,102.9 L379.3,103.2 L377.6,103.5 L375.9,103.8 L374.1,104.1 L372.3,104.3 L370.5,104.6 L368.6,104.8 L366.7,105.1 L364.8,105.3 L362.8,105.5 L360.8,105.7 L358.8,105.8 L356.7,106.0 L354.6,106.1 L352.5,106.2 L350.3,106.4 L348.1,106.4 L345.9,106.5 L343.7,106.6 L341.4,106.6 L339.1,106.7 L336.8,106.7 L334.5,106.7 L332.2,106.7 L329.8,106.6 L327.5,106.6 L325.1,106.5 L322.7,106.4 L320.3,106.3 L317.9,106.2 L315.5,106.1 L313.0,105.9 L310.6,105.7 L308.1,105.6 L305.7,105.4 L303.2,105.1 L300.8,104.9 L298.3,104.6 L295.9,104.4 L293.5,104.1 L291.0,103.8 L288.6,103.5 L286.2,103.1" fill="none" stroke="#ff0000" stroke-width="1.0" stroke-linejoin="round"/>
<path d="M286.2,102.2 L288.3,101.4 L290.4,100.5 L292.5,99.6 L294.6,98.8 L296.8,98.0 L298.9,97.2 L301.0,96.4 L303.2,95.6 L305.3,94.8 L307.4,94.1 L309.6,93.4 L311.7,92.7 L313.9,92.0 L316.0,91.4 L318.1,90.7 L320.2,90.1 L322.4,89.5 L324.5,88.9 L326.6,88.3 L328.6,87.8 L330.7,87.3 L332.8,86.8 L334.9,86.3 L336.9,85.8 L338.9,85.4 L341.0,84.9 L343.0,84.5 L345.0,84.1 L346.9,83.8 L348.9,83.4 L350.8,83.1 L352.8,82.8 L354.7,82.5 L356.5,82.2 L358.4,82.0 L360.2,81.7 L362.0,81.5 L363.8,81.3 L365.6,81.1 L367.3,81.0 L369.1,80.8 L370.7,80.7 L372.4,80.6 L374.0,80.5 L375.6,80.5 L377.2,80.4 L378.8,80.4 L380.3,80.4 L381.7,80.4 L383.2,80.4 L384.6,80.4 L386.0,80.5 L387.3,80.5 L388.6,80.6 L389.9,80.7 L391.1,80.9 L392.3,81.0 L393.5,81.1 L394.6,81.3 L395.7,81.5 L396.7,81.7 L397.7,81.9 L398.7,82.1 L399.6,82.3 L400.5,82.6 L401.3,82.8 L402.1,83.1 L402.8,83.4 L403.5,83.7 L404.2,84.0 L404.8,84.3 L405.3,84.6 L405.8,84.9 L406.3,85.3 L406.7,85.6 L407.1,86.0 L407.4,86.3 L407.7,86.7 L407.9,87.1 L408.1,87.5 L408.2,87.9 L408.3,88.3 L408.3,88.7 L408.3,89.1 L408.2,89.5 L408.1,89.9 L407.9,90.4 L407.7,90.8 L407.4,91.2 L407.0,91.6 L406.7,92.1 L406.2,92.5 L405.7,92.9 L405.2,93.4 L404.6,93.8 L404.0,94.2 L403.3,94.7 L402.5,95.1 L401.8,95.5 L400.9,96.0 L400.0,96.4 L399.1,96.8 L398.1,97.2 L397.1,97.6 L396.0,98.0 L394.8,98.4 L393.6,98.8 L392.4,99.2 L391.1,99.6 L389.8,100.0 L388.4,100.3 L387.0,100.7 L385.6,101.0 L384.0,101.4 L382.5,101.7 L380.9,102.0 L379.3,102.3 L377.6,102.6 L375.9,102.9 L374.1,103.2 L372.3,103.4 L370.5,103.7 L368.6,103.9 L366.7,104.2 L364.8,104.4 L362.8,104.6 L360.8,104.8 L358.8,104.9 L356.7,105.1 L354.6,105.2 L352.5,105.3 L350.3,105.5 L348.1,105.5 L345.9,105.6 L343.7,105.7 L341.4,105.7 L339.1,105.8 L336.8,105.8 L334.5,105.8 L332.2,105.8 L329.8,105.7 L327.5,105.7 L325.1,105.6 L322.7,105.5 L320.3,105.4 L317.9,105.3 L315.5,105.2 L313.0,105.0 L310.6,104.8 L308.1,104.7 L305.7,104.5 L303.2,104.2 L300.8,104.0 L298.3,103.7 L295.9,103.5 L293.5,103.2 L291.0,102.9 L288.6,102.6 L286.2,102.2" fill="none" stroke="#ff0000" stroke-width="1.0" stroke-linejoin="round"/>
<path d="M286.2,104.0 L288.6,104.4 L291.0,104.8 L293.4,105.1 L295.8,105.5 L298.2,105.9 L300.6,106.4 L303.0,106.8 L305.4,107.3 L307.7,107.8 L310.1,108.2 L312.4,108.7 L314.8,109.3 L317.1,109.8 L319.4,110.3 L321.7,110.9 L323.9,111.5 L326.2,112.1 L328.4,112.7 L330.6,113.3 L332.8,113.9 L335.0,114.5 L337.1,115.2 L339.2,115.8 L341.3,116.5 L343.4,117.2 L345.5,117.9 L347.5,118.6 L349.5,119.3 L351.4,120.0 L353.4,120.7 L355.3,121.5 L357.1,122.2 L359.0,123.0 L360.8,123.7 L362.5,124.5 L364.3,125.2 L366.0,126.0 L367.6,126.8 L369.3,127.5 L370.8,128.3 L372.4,129.1 L373.9,129.9 L375.4,130.7 L376.8,131.5 L378.2,132.3 L379.5,133.0 L380.8,133.8 L382.1,134.6 L383.3,135.4 L384.4,136.2 L385.6,137.0 L386.6,137.7 L387.7,138.5 L388.7,139.3 L389.6,140.0 L390.5,140.8 L391.3,141.5 L392.1,142.3 L392.8,143.0 L393.5,143.7 L394.2,144.4 L394.7,145.1 L395.3,145.8 L395.8,146.5 L396.2,147.1 L396.6,147.8 L396.9,148.4 L397.2,149.0 L397.4,149.6 L397.6,150.2 L397.8,150.8 L397.8,151.3 L397.9,151.9 L397.8,152.4 L397.8,152.9 L397.6,153.3 L397.4,153.8 L397.2,154.2 L396.9,154.7 L396.6,155.0 L396.2,155.4 L395.8,155.8 L395.3,156.1 L394.8,156.4 L394.2,156.7 L393.6,156.9 L392.9,157.1 L392.2,157.3 L391.5,157.5 L390.6,157.6 L389.8,157.8 L388.9,157.8 L388.0,157.9 L387.0,157.9 L386.0,157.9 L384.9,157.9 L383.8,157.9 L382.7,157.8 L381.5,157.7 L380.3,157.5 L379.1,157.4 L377.8,157.2 L376.5,156.9 L375.1,156.7 L373.7,156.4 L372.3,156.1 L370.9,155.7 L369.4,155.4 L367.9,154.9 L366.4,154.5 L364.9,154.0 L363.3,153.5 L361.7,153.0 L360.1,152.5 L358.5,151.9 L356.9,151.3 L355.2,150.6 L353.5,149.9 L351.8,149.2 L350.1,148.5 L348.4,147.8 L346.7,147.0 L345.0,146.2 L343.2,145.3 L341.5,144.5 L339.7,143.6 L338.0,142.7 L336.2,141.8 L334.4,140.8 L332.7,139.8 L330.9,138.8 L329.2,137.8 L327.4,136.7 L325.7,135.7 L323.9,134.6 L322.2,133.5 L320.4,132.3 L318.7,131.2 L317.0,130.0 L315.3,128.9 L313.6,127.7 L311.9,126.4 L310.2,125.2 L308.6,124.0 L307.0,122.7 L305.3,121.4 L303.7,120.2 L302.2,118.9 L300.6,117.6 L299.0,116.2 L297.5,114.9 L296.0,113.6 L294.5,112.2 L293.1,110.9 L291.6,109.5 L290.2,108.2 L288.9,106.8 L287.5,105.4 L286.2,104.0" fill="none" stroke="#ff0000" stroke-width="1.0" stroke-linejoin="round"/>
<path d="M286.2,103.1 L288.6,103.5 L291.0,103.9 L293.4,104.2 L295.8,104.6 L298.2,105.0 L300.6,105.5 L303.0,105.9 L305.4,106.4 L307.7,106.9 L310.1,107.3 L312.4,107.8 L314.8,108.4 L317.1,108.9 L319.4,109.4 L321.7,110.0 L323.9,110.6 L326.2,111.2 L328.4,111.8 L330.6,112.4 L332.8,113.0 L335.0,113.6 L337.1,114.3 L339.2,114.9 L341.3,115.6 L343.4,116.3 L345.5,117.0 L347.5,117.7 L349.5,118.4 L351.4,119.1 L353.4,119.8 L355.3,120.6 L357.1,121.3 L359.0,122.1 L360.8,122.8 L362.5,123.6 L364.3,124.3 L366.0,125.1 L367.6,125.9 L369.3,126.6 L370.8,127.4 L372.4,128.2 L373.9,129.0 L375.4,129.8 L376.8,130.6 L378.2,131.4 L379.5,132.1 L380.8,132.9 L382.1,133.7 L383.3,134.5 L384.4,135.3 L385.6,136.1 L386.6,136.8 L387.7,137.6 L388.7,138.4 L389.6,139.1 L390.5,139.9 L391.3,140.6 L392.1,141.4 L392.8,142.1 L393.5,142.8 L394.2,143.5 L394.7,144.2 L395.3,144.9 L395.8,145.6 L396.2,146.2 L396.6,146.9 L396.9,147.5 L397.2,148.1 L397.4,148.7 L397.6,149.3 L397.8,149.9 L397.8,150.4 L397.9,151.0 L397.8,151.5 L397.8,152.0 L397.6,152.4 L397.4,152.9 L397.2,153.3 L396.9,153.8 L396.6,154.1 L396.2,154.5 L395.8,154.9 L395.3,155.2 L394.8,155.5 L394.2,155.8 L393.6,156.0 L392.9,156.2 L392.2,156.4 L391.5,156.6 L390.6,156.7 L389.8,156.9 L388.9,156.9 L388.0,157.0 L387.0,157.0 L386.0,157.0 L384.9,157.0 L383.8,157.0 L382.7,156.9 L381.5,156.8 L380.3,156.6 L379.1,156.5 L377.8,156.3 L376.5,156.0 L375.1,155.8 L373.7,155.5 L372.3,155.2 L370.9,154.8 L369.4,154.5 L367.9,154.0 L366.4,153.6 L364.9,153.1 L363.3,152.6 L361.7,152.1 L360.1,151.6 L358.5,151.0 L356.9,150.4 L355.2,149.7 L353.5,149.0 L351.8,148.3 L350.1,147.6 L348.4,146.9 L346.7,146.1 L345.0,145.3 L343.2,144.4 L341.5,143.6 L339.7,142.7 L338.0,141.8 L336.2,140.9 L334.4,139.9 L332.7,138.9 L330.9,137.9 L329.2,136.9 L327.4,135.8 L325.7,134.8 L323.9,133.7 L322.2,132.6 L320.4,131.4 L318.7,130.3 L317.0,129.1 L315.3,128.0 L313.6,126.8 L311.9,125.5 L310.2,124.3 L308.6,123.1 L307.0,121.8 L305.3,120.5 L303.7,119.3 L302.2,118.0 L300.6,116.7 L299.0,115.3 L297.5,114.0 L296.0,112.7 L294.5,111.3 L293.1,110.0 L291.6,108.6 L290.2,107.3 L288.9,105.9 L287.5,104.5 L286.2,103.1" fill="none" stroke="#ff0000" stroke-width="1.0" stroke-linejoin="round"/>
<path d="M286.2,102.2 L288.6,102.6 L291.0,103.0 L293.4,103.3 L295.8,103.7 L298.2,104.1 L300.6,104.6 L303.0,105.0 L305.4,105.5 L307.7,106.0 L310.1,106.4 L312.4,106.9 L314.8,107.5 L317.1,108.0 L319.4,108.5 L321.7,109.1 L323.9,109.7 L326.2,110.3 L328.4,110.9 L330.6,111.5 L332.8,112.1 L335.0,112.7 L337.1,113.4 L339.2,114.0 L341.3,114.7 L343.4,115.4 L345.5,116.1 L347.5,116.8 L349.5,117.5 L351.4,118.2 L353.4,118.9 L355.3,119.7 L357.1,120.4 L359.0,121.2 L360.8,121.9 L362.5,122.7 L364.3,123.4 L366.0,124.2 L367.6,125.0 L369.3,125.7 L370.8,126.5 L372.4,127.3 L373.9,128.1 L375.4,128.9 L376.8,129.7 L378.2,130.5 L379.5,131.2 L380.8,132.0 L382.1,132.8 L383.3,133.6 L384.4,134.4 L385.6,135.2 L386.6,135.9 L387.7,136.7 L388.7,137.5 L389.6,138.2 L390.5,139.0 L391.3,139.7 L392.1,140.5 L392.8,141.2 L393.5,141.9 L394.2,142.6 L394.7,143.3 L395.3,144.0 L395.8,144.7 L396.2,145.3 L396.6,146.0 L396.9,146.6 L397.2,147.2 L397.4,147.8 L397.6,148.4 L397.8,149.0 L397.8,149.5 L397.9,150.1 L397.8,150.6 L397.8,151.1 L397.6,151.5 L397.4,152.0 L397.2,152.4 L396.9,152.9 L396.6,153.2 L396.2,153.6 L395.8,154.0 L395.3,154.3 L394.8,154.6 L394.2,154.9 L393.6,155.1 L392.9,155.3 L392.2,155.5 L391.5,155.7 L390.6,155.8 L389.8,156.0 L388.9,156.0 L388.0,156.1 L387.0,156.1 L386.0,156.1 L384.9,156.1 L383.8,156.1 L382.7,156.0 L381.5,155.9 L380.3,155.7 L379.1,155.6 L377.8,155.4 L376.5,155.1 L375.1,154.9 L373.7,154.6 L372.3,154.3 L370.9,153.9 L369.4,153.6 L367.9,153.1 L366.4,152.7 L364.9,152.2 L363.3,151.7 L361.7,151.2 L360.1,150.7 L358.5,150.1 L356.9,149.5 L355.2,148.8 L353.5,148.1 L351.8,147.4 L350.1,146.7 L348.4,146.0 L346.7,145.2 L345.0,144.4 L343.2,143.5 L341.5,142.7 L339.7,141.8 L338.0,140.9 L336.2,140.0 L334.4,139.0 L332.7,138.0 L330.9,137.0 L329.2,136.0 L327.4,134.9 L325.7,133.9 L323.9,132.8 L322.2,131.7 L320.4,130.5 L318.7,129.4 L317.0,128.2 L315.3,127.1 L313.6,125.9 L311.9,124.6 L310.2,123.4 L308.6,122.2 L307.0,120.9 L305.3,119.6 L303.7,118.4 L302.2,117.1 L300.6,115.8 L299.0,114.4 L297.5,113.1 L296.0,111.8 L294.5,110.4 L293.1,109.1 L291.6,107.7 L290.2,106.4 L288.9,105.0 L287.5,103.6 L286.2,102.2" fill="none" stroke="#ff0000" stroke-width="1.0" stroke-linejoin="round"/>
<path d="M286.2,104.0 L287.5,105.4 L288.8,106.8 L290.1,108.2 L291.3,109.7 L292.6,111.1 L293.8,112.6 L295.0,114.0 L296.2,115.5 L297.4,117.0 L298.5,118.5 L299.6,120.0 L300.7,121.5 L301.8,123.0 L302.9,124.5 L303.9,126.0 L304.9,127.6 L305.9,129.1 L306.9,130.7 L307.8,132.2 L308.7,133.8 L309.6,135.3 L310.4,136.9 L311.3,138.4 L312.1,140.0 L312.8,141.5 L313.6,143.1 L314.3,144.6 L315.0,146.1 L315.6,147.7 L316.2,149.2 L316.8,150.7 L317.4,152.2 L317.9,153.7 L318.4,155.2 L318.9,156.7 L319.3,158.2 L319.7,159.6 L320.1,161.1 L320.4,162.5 L320.7,163.9 L321.0,165.3 L321.3,166.7" fill="none" stroke="#ff0000" stroke-width="1.1" stroke-dasharray="2 2"/>
<path d="M284.4,171.5 L283.9,170.2 L283.5,168.8 L283.1,167.4 L282.7,166.0 L282.3,164.5 L282.0,163.1 L281.7,161.6 L281.4,160.1 L281.1,158.5 L280.8,157.0 L280.6,155.4 L280.4,153.8 L280.2,152.3 L280.1,150.6 L279.9,149.0 L279.8,147.4 L279.8,145.8 L279.7,144.1 L279.7,142.5 L279.7,140.8 L279.7,139.1 L279.8,137.4 L279.9,135.8 L280.0,134.1 L280.1,132.4 L280.3,130.7 L280.4,129.0 L280.7,127.3 L280.9,125.6 L281.2,123.9 L281.4,122.2 L281.8,120.6 L282.1,118.9 L282.4,117.2 L282.8,115.5 L283.2,113.9 L283.7,112.2 L284.1,110.6 L284.6,108.9 L285.1,107.3 L285.6,105.7 L286.2,104.0" fill="none" stroke="#ff0000" stroke-width="1.1" stroke-dasharray="2 2"/>
<path d="M321.5,168.0 L321.7,169.4 L321.8,170.7 L321.9,172.0 L322.0,173.2 L322.1,174.5 L322.1,175.7 L322.1,176.9 L322.0,178.1 L322.0,179.2 L321.9,180.4 L321.7,181.4 L321.6,182.5 L321.4,183.5 L321.2,184.5 L320.9,185.5 L320.7,186.4 L320.4,187.3 L320.1,188.2 L319.7,189.0 L319.3,189.8 L318.9,190.6 L318.5,191.3 L318.1,192.0 L317.6,192.6 L317.1,193.2 L316.6,193.8 L316.0,194.3 L315.5,194.8 L314.9,195.2 L314.3,195.6 L313.7,196.0 L313.1,196.3 L312.4,196.5 L311.8,196.8 L311.1,196.9 L310.4,197.1 L309.7,197.2 L309.0,197.2 L308.3,197.2 L307.6,197.2 L306.9,197.1 L306.1,197.0 L305.4,196.8 L304.6,196.6 L303.9,196.3 L303.1,196.0 L302.4,195.7 L301.6,195.3 L300.8,194.9 L300.1,194.4 L299.3,193.9 L298.6,193.3 L297.8,192.7 L297.1,192.1 L296.3,191.4 L295.6,190.7 L294.9,189.9 L294.1,189.1 L293.4,188.3 L292.7,187.4 L292.0,186.5 L291.4,185.5 L290.7,184.5 L290.0,183.5 L289.4,182.5 L288.8,181.4 L288.2,180.3 L287.6,179.1 L287.0,177.9 L286.4,176.7 L285.9,175.4 L285.4,174.2 L284.9,172.9" fill="none" stroke="#ff0000" stroke-width="1.0" stroke-linejoin="round"/>
<path d="M321.5,167.1 L321.7,168.5 L321.8,169.8 L321.9,171.1 L322.0,172.3 L322.1,173.6 L322.1,174.8 L322.1,176.0 L322.0,177.2 L322.0,178.3 L321.9,179.5 L321.7,180.5 L321.6,181.6 L321.4,182.6 L321.2,183.6 L320.9,184.6 L320.7,185.5 L320.4,186.4 L320.1,187.3 L319.7,188.1 L319.3,188.9 L318.9,189.7 L318.5,190.4 L318.1,191.1 L317.6,191.7 L317.1,192.3 L316.6,192.9 L316.0,193.4 L315.5,193.9 L314.9,194.3 L314.3,194.7 L313.7,195.1 L313.1,195.4 L312.4,195.6 L311.8,195.9 L311.1,196.0 L310.4,196.2 L309.7,196.3 L309.0,196.3 L308.3,196.3 L307.6,196.3 L306.9,196.2 L306.1,196.1 L305.4,195.9 L304.6,195.7 L303.9,195.4 L303.1,195.1 L302.4,194.8 L301.6,194.4 L300.8,194.0 L300.1,193.5 L299.3,193.0 L298.6,192.4 L297.8,191.8 L297.1,191.2 L296.3,190.5 L295.6,189.8 L294.9,189.0 L294.1,188.2 L293.4,187.4 L292.7,186.5 L292.0,185.6 L291.4,184.6 L290.7,183.6 L290.0,182.6 L289.4,181.6 L288.8,180.5 L288.2,179.4 L287.6,178.2 L287.0,177.0 L286.4,175.8 L285.9,174.5 L285.4,173.3 L284.9,172.0" fill="none" stroke="#ff0000" stroke-width="1.0" stroke-linejoin="round"/>
<path d="M321.5,166.2 L321.7,167.6 L321.8,168.9 L321.9,170.2 L322.0,171.4 L322.1,172.7 L322.1,173.9 L322.1,175.1 L322.0,176.3 L322.0,177.4 L321.9,178.6 L321.7,179.6 L321.6,180.7 L321.4,181.7 L321.2,182.7 L320.9,183.7 L320.7,184.6 L320.4,185.5 L320.1,186.4 L319.7,187.2 L319.3,188.0 L318.9,188.8 L318.5,189.5 L318.1,190.2 L317.6,190.8 L317.1,191.4 L316.6,192.0 L316.0,192.5 L315.5,193.0 L314.9,193.4 L314.3,193.8 L313.7,194.2 L313.1,194.5 L312.4,194.7 L311.8,195.0 L311.1,195.1 L310.4,195.3 L309.7,195.4 L309.0,195.4 L308.3,195.4 L307.6,195.4 L306.9,195.3 L306.1,195.2 L305.4,195.0 L304.6,194.8 L303.9,194.5 L303.1,194.2 L302.4,193.9 L301.6,193.5 L300.8,193.1 L300.1,192.6 L299.3,192.1 L298.6,191.5 L297.8,190.9 L297.1,190.3 L296.3,189.6 L295.6,188.9 L294.9,188.1 L294.1,187.3 L293.4,186.5 L292.7,185.6 L292.0,184.7 L291.4,183.7 L290.7,182.7 L290.0,181.7 L289.4,180.7 L288.8,179.6 L288.2,178.5 L287.6,177.3 L287.0,176.1 L286.4,174.9 L285.9,173.6 L285.4,172.4 L284.9,171.1" fill="none" stroke="#ff0000" stroke-width="1.0" stroke-linejoin="round"/>
<path d="M286.2,104.0 L285.6,105.6 L285.0,107.3 L284.4,108.9 L283.7,110.5 L283.1,112.1 L282.4,113.7 L281.6,115.4 L280.9,117.0 L280.1,118.6 L279.3,120.2 L278.5,121.8 L277.7,123.4 L276.8,125.0 L275.9,126.6 L275.0,128.2 L274.0,129.8 L273.1,131.4 L272.1,132.9 L271.1,134.5 L270.1,136.0 L269.0,137.5 L268.0,139.0 L266.9,140.5 L265.8,142.0 L264.7,143.5 L263.5,144.9 L262.4,146.4 L261.2,147.8 L260.0,149.2 L258.8,150.5 L257.6,151.9 L256.4,153.2 L255.2,154.5 L254.0,155.8 L252.7,157.1 L251.5,158.3 L250.2,159.5 L249.0,160.7 L247.7,161.9 L246.4,163.0 L245.1,164.1 L243.9,165.2 L242.6,166.2 L241.3,167.2 L240.0,168.2 L238.8,169.1 L237.5,170.1 L236.2,170.9 L235.0,171.8 L233.7,172.6 L232.5,173.4 L231.3,174.1 L230.1,174.8 L228.8,175.5 L227.7,176.2 L226.5,176.8 L225.3,177.3 L224.2,177.8 L223.0,178.3 L221.9,178.8 L220.8,179.2 L219.8,179.6 L218.7,179.9 L217.7,180.2 L216.7,180.5 L215.7,180.7 L214.7,180.9 L213.8,181.1 L212.9,181.2 L212.1,181.3 L211.2,181.3 L210.4,181.3 L209.6,181.3 L208.9,181.2 L208.2,181.1 L207.5,180.9 L206.9,180.7 L206.3,180.5 L205.7,180.3 L205.2,180.0 L204.7,179.7 L204.2,179.3 L203.8,178.9 L203.4,178.5 L203.1,178.0 L202.8,177.5 L202.6,177.0 L202.4,176.5 L202.2,175.9 L202.1,175.3 L202.0,174.6 L201.9,174.0 L201.9,173.3 L202.0,172.6 L202.1,171.8 L202.2,171.0 L202.4,170.2 L202.6,169.4 L202.9,168.6 L203.2,167.7 L203.5,166.8 L203.9,165.9 L204.4,165.0 L204.9,164.0 L205.4,163.0 L206.0,162.1 L206.6,161.0 L207.2,160.0 L207.9,159.0 L208.7,157.9 L209.5,156.9 L210.3,155.8 L211.2,154.7 L212.1,153.6 L213.0,152.5 L214.0,151.4 L215.1,150.2 L216.1,149.1 L217.3,148.0 L218.4,146.8 L219.6,145.6 L220.8,144.5 L222.1,143.3 L223.4,142.1 L224.7,141.0 L226.1,139.8 L227.5,138.6 L228.9,137.4 L230.4,136.3 L231.9,135.1 L233.5,133.9 L235.0,132.7 L236.6,131.6 L238.2,130.4 L239.9,129.2 L241.6,128.1 L243.3,126.9 L245.0,125.8 L246.8,124.7 L248.6,123.5 L250.4,122.4 L252.2,121.3 L254.1,120.2 L256.0,119.1 L257.9,118.0 L259.8,116.9 L261.7,115.8 L263.7,114.8 L265.7,113.7 L267.6,112.7 L269.6,111.7 L271.7,110.7 L273.7,109.7 L275.8,108.7 L277.8,107.7 L279.9,106.8 L282.0,105.9 L284.1,104.9 L286.2,104.0" fill="none" stroke="#ff0000" stroke-width="1.0" stroke-linejoin="round"/>
<path d="M286.2,103.1 L285.6,104.7 L285.0,106.4 L284.4,108.0 L283.7,109.6 L283.1,111.2 L282.4,112.8 L281.6,114.5 L280.9,116.1 L280.1,117.7 L279.3,119.3 L278.5,120.9 L277.7,122.5 L276.8,124.1 L275.9,125.7 L275.0,127.3 L274.0,128.9 L273.1,130.5 L272.1,132.0 L271.1,133.6 L270.1,135.1 L269.0,136.6 L268.0,138.1 L266.9,139.6 L265.8,141.1 L264.7,142.6 L263.5,144.0 L262.4,145.5 L261.2,146.9 L260.0,148.3 L258.8,149.6 L257.6,151.0 L256.4,152.3 L255.2,153.6 L254.0,154.9 L252.7,156.2 L251.5,157.4 L250.2,158.6 L249.0,159.8 L247.7,161.0 L246.4,162.1 L245.1,163.2 L243.9,164.3 L242.6,165.3 L241.3,166.3 L240.0,167.3 L238.8,168.2 L237.5,169.2 L236.2,170.0 L235.0,170.9 L233.7,171.7 L232.5,172.5 L231.3,173.2 L230.1,173.9 L228.8,174.6 L227.7,175.3 L226.5,175.9 L225.3,176.4 L224.2,176.9 L223.0,177.4 L221.9,177.9 L220.8,178.3 L219.8,178.7 L218.7,179.0 L217.7,179.3 L216.7,179.6 L215.7,179.8 L214.7,180.0 L213.8,180.2 L212.9,180.3 L212.1,180.4 L211.2,180.4 L210.4,180.4 L209.6,180.4 L208.9,180.3 L208.2,180.2 L207.5,180.0 L206.9,179.8 L206.3,179.6 L205.7,179.4 L205.2,179.1 L204.7,178.8 L204.2,178.4 L203.8,178.0 L203.4,177.6 L203.1,177.1 L202.8,176.6 L202.6,176.1 L202.4,175.6 L202.2,175.0 L202.1,174.4 L202.0,173.7 L201.9,173.1 L201.9,172.4 L202.0,171.7 L202.1,170.9 L202.2,170.1 L202.4,169.3 L202.6,168.5 L202.9,167.7 L203.2,166.8 L203.5,165.9 L203.9,165.0 L204.4,164.1 L204.9,163.1 L205.4,162.1 L206.0,161.2 L206.6,160.1 L207.2,159.1 L207.9,158.1 L208.7,157.0 L209.5,156.0 L210.3,154.9 L211.2,153.8 L212.1,152.7 L213.0,151.6 L214.0,150.5 L215.1,149.3 L216.1,148.2 L217.3,147.1 L218.4,145.9 L219.6,144.7 L220.8,143.6 L222.1,142.4 L223.4,141.2 L224.7,140.1 L226.1,138.9 L227.5,137.7 L228.9,136.5 L230.4,135.4 L231.9,134.2 L233.5,133.0 L235.0,131.8 L236.6,130.7 L238.2,129.5 L239.9,128.3 L241.6,127.2 L243.3,126.0 L245.0,124.9 L246.8,123.8 L248.6,122.6 L250.4,121.5 L252.2,120.4 L254.1,119.3 L256.0,118.2 L257.9,117.1 L259.8,116.0 L261.7,114.9 L263.7,113.9 L265.7,112.8 L267.6,111.8 L269.6,110.8 L271.7,109.8 L273.7,108.8 L275.8,107.8 L277.8,106.8 L279.9,105.9 L282.0,105.0 L284.1,104.0 L286.2,103.1" fill="none" stroke="#ff0000" stroke-width="1.0" stroke-linejoin="round"/>
<path d="M286.2,102.2 L285.6,103.8 L285.0,105.5 L284.4,107.1 L283.7,108.7 L283.1,110.3 L282.4,111.9 L281.6,113.6 L280.9,115.2 L280.1,116.8 L279.3,118.4 L278.5,120.0 L277.7,121.6 L276.8,123.2 L275.9,124.8 L275.0,126.4 L274.0,128.0 L273.1,129.6 L272.1,131.1 L271.1,132.7 L270.1,134.2 L269.0,135.7 L268.0,137.2 L266.9,138.7 L265.8,140.2 L264.7,141.7 L263.5,143.1 L262.4,144.6 L261.2,146.0 L260.0,147.4 L258.8,148.7 L257.6,150.1 L256.4,151.4 L255.2,152.7 L254.0,154.0 L252.7,155.3 L251.5,156.5 L250.2,157.7 L249.0,158.9 L247.7,160.1 L246.4,161.2 L245.1,162.3 L243.9,163.4 L242.6,164.4 L241.3,165.4 L240.0,166.4 L238.8,167.3 L237.5,168.3 L236.2,169.1 L235.0,170.0 L233.7,170.8 L232.5,171.6 L231.3,172.3 L230.1,173.0 L228.8,173.7 L227.7,174.4 L226.5,175.0 L225.3,175.5 L224.2,176.0 L223.0,176.5 L221.9,177.0 L220.8,177.4 L219.8,177.8 L218.7,178.1 L217.7,178.4 L216.7,178.7 L215.7,178.9 L214.7,179.1 L213.8,179.3 L212.9,179.4 L212.1,179.5 L211.2,179.5 L210.4,179.5 L209.6,179.5 L208.9,179.4 L208.2,179.3 L207.5,179.1 L206.9,178.9 L206.3,178.7 L205.7,178.5 L205.2,178.2 L204.7,177.9 L204.2,177.5 L203.8,177.1 L203.4,176.7 L203.1,176.2 L202.8,175.7 L202.6,175.2 L202.4,174.7 L202.2,174.1 L202.1,173.5 L202.0,172.8 L201.9,172.2 L201.9,171.5 L202.0,170.8 L202.1,170.0 L202.2,169.2 L202.4,168.4 L202.6,167.6 L202.9,166.8 L203.2,165.9 L203.5,165.0 L203.9,164.1 L204.4,163.2 L204.9,162.2 L205.4,161.2 L206.0,160.3 L206.6,159.2 L207.2,158.2 L207.9,157.2 L208.7,156.1 L209.5,155.1 L210.3,154.0 L211.2,152.9 L212.1,151.8 L213.0,150.7 L214.0,149.6 L215.1,148.4 L216.1,147.3 L217.3,146.2 L218.4,145.0 L219.6,143.8 L220.8,142.7 L222.1,141.5 L223.4,140.3 L224.7,139.2 L226.1,138.0 L227.5,136.8 L228.9,135.6 L230.4,134.5 L231.9,133.3 L233.5,132.1 L235.0,130.9 L236.6,129.8 L238.2,128.6 L239.9,127.4 L241.6,126.3 L243.3,125.1 L245.0,124.0 L246.8,122.9 L248.6,121.7 L250.4,120.6 L252.2,119.5 L254.1,118.4 L256.0,117.3 L257.9,116.2 L259.8,115.1 L261.7,114.0 L263.7,113.0 L265.7,111.9 L267.6,110.9 L269.6,109.9 L271.7,108.9 L273.7,107.9 L275.8,106.9 L277.8,105.9 L279.9,105.0 L282.0,104.1 L284.1,103.1 L286.2,102.2" fill="none" stroke="#ff0000" stroke-width="1.0" stroke-linejoin="round"/>
<path d="M286.2,104.0 L284.0,104.9 L281.9,105.8 L279.8,106.7 L277.6,107.5 L275.4,108.4 L273.2,109.2 L271.0,110.0 L268.8,110.8 L266.6,111.6 L264.4,112.4 L262.1,113.1 L259.9,113.8 L257.7,114.6 L255.4,115.3 L253.2,115.9 L250.9,116.6 L248.7,117.2 L246.4,117.9 L244.2,118.5 L241.9,119.1 L239.7,119.6 L237.5,120.2 L235.3,120.7 L233.0,121.2 L230.8,121.7 L228.7,122.2 L226.5,122.6 L224.3,123.1 L222.2,123.5 L220.1,123.9 L218.0,124.2 L215.9,124.6 L213.8,124.9 L211.8,125.2 L209.8,125.5 L207.8,125.8 L205.8,126.0 L203.9,126.2 L202.0,126.4 L200.1,126.6 L198.3,126.7 L196.5,126.9 L194.7,127.0 L192.9,127.1 L191.2,127.1 L189.6,127.2 L187.9,127.2 L186.3,127.2 L184.8,127.2 L183.3,127.2 L181.8,127.2 L180.4,127.1 L179.0,127.0 L177.6,126.9 L176.3,126.8 L175.1,126.7 L173.9,126.5 L172.7,126.4 L171.6,126.2 L170.5,126.0 L169.5,125.8 L168.5,125.5 L167.6,125.3 L166.7,125.0 L165.9,124.7 L165.1,124.5 L164.4,124.2 L163.8,123.8 L163.1,123.5 L162.6,123.2 L162.1,122.8 L161.6,122.5 L161.2,122.1 L160.9,121.7 L160.6,121.4 L160.3,121.0 L160.1,120.6 L160.0,120.2 L159.9,119.7 L159.9,119.3 L159.9,118.9 L160.0,118.5 L160.1,118.0 L160.3,117.6 L160.6,117.1 L160.8,116.7 L161.2,116.2 L161.6,115.8 L162.0,115.3 L162.5,114.9 L163.1,114.4 L163.7,114.0 L164.3,113.5 L165.0,113.1 L165.8,112.6 L166.6,112.2 L167.4,111.7 L168.3,111.3 L169.2,110.8 L170.2,110.4 L171.3,109.9 L172.4,109.5 L173.5,109.1 L174.7,108.7 L175.9,108.3 L177.1,107.9 L178.4,107.5 L179.8,107.1 L181.2,106.7 L182.6,106.3 L184.1,105.9 L185.6,105.6 L187.1,105.2 L188.7,104.9 L190.3,104.6 L192.0,104.3 L193.7,104.0 L195.4,103.7 L197.2,103.4 L199.0,103.1 L200.8,102.8 L202.7,102.6 L204.6,102.4 L206.5,102.1 L208.5,101.9 L210.5,101.7 L212.5,101.6 L214.5,101.4 L216.6,101.2 L218.7,101.1 L220.8,101.0 L222.9,100.9 L225.1,100.8 L227.2,100.7 L229.5,100.6 L231.7,100.6 L233.9,100.6 L236.2,100.5 L238.5,100.5 L240.7,100.6 L243.1,100.6 L245.4,100.6 L247.7,100.7 L250.1,100.8 L252.4,100.9 L254.8,101.0 L257.2,101.1 L259.6,101.3 L262.0,101.5 L264.4,101.6 L266.8,101.8 L269.2,102.1 L271.6,102.3 L274.0,102.5 L276.5,102.8 L278.9,103.1 L281.3,103.4 L283.7,103.7 L286.2,104.0" fill="none" stroke="#ff0000" stroke-width="1.0" stroke-linejoin="round"/>
<path d="M286.2,103.1 L284.0,104.0 L281.9,104.9 L279.8,105.8 L277.6,106.6 L275.4,107.5 L273.2,108.3 L271.0,109.1 L268.8,109.9 L266.6,110.7 L264.4,111.5 L262.1,112.2 L259.9,112.9 L257.7,113.7 L255.4,114.4 L253.2,115.0 L250.9,115.7 L248.7,116.3 L246.4,117.0 L244.2,117.6 L241.9,118.2 L239.7,118.7 L237.5,119.3 L235.3,119.8 L233.0,120.3 L230.8,120.8 L228.7,121.3 L226.5,121.7 L224.3,122.2 L222.2,122.6 L220.1,123.0 L218.0,123.3 L215.9,123.7 L213.8,124.0 L211.8,124.3 L209.8,124.6 L207.8,124.9 L205.8,125.1 L203.9,125.3 L202.0,125.5 L200.1,125.7 L198.3,125.8 L196.5,126.0 L194.7,126.1 L192.9,126.2 L191.2,126.2 L189.6,126.3 L187.9,126.3 L186.3,126.3 L184.8,126.3 L183.3,126.3 L181.8,126.3 L180.4,126.2 L179.0,126.1 L177.6,126.0 L176.3,125.9 L175.1,125.8 L173.9,125.6 L172.7,125.5 L171.6,125.3 L170.5,125.1 L169.5,124.9 L168.5,124.6 L167.6,124.4 L166.7,124.1 L165.9,123.8 L165.1,123.6 L164.4,123.3 L163.8,122.9 L163.1,122.6 L162.6,122.3 L162.1,121.9 L161.6,121.6 L161.2,121.2 L160.9,120.8 L160.6,120.5 L160.3,120.1 L160.1,119.7 L160.0,119.3 L159.9,118.8 L159.9,118.4 L159.9,118.0 L160.0,117.6 L160.1,117.1 L160.3,116.7 L160.6,116.2 L160.8,115.8 L161.2,115.3 L161.6,114.9 L162.0,114.4 L162.5,114.0 L163.1,113.5 L163.7,113.1 L164.3,112.6 L165.0,112.2 L165.8,111.7 L166.6,111.3 L167.4,110.8 L168.3,110.4 L169.2,109.9 L170.2,109.5 L171.3,109.0 L172.4,108.6 L173.5,108.2 L174.7,107.8 L175.9,107.4 L177.1,107.0 L178.4,106.6 L179.8,106.2 L181.2,105.8 L182.6,105.4 L184.1,105.0 L185.6,104.7 L187.1,104.3 L188.7,104.0 L190.3,103.7 L192.0,103.4 L193.7,103.1 L195.4,102.8 L197.2,102.5 L199.0,102.2 L200.8,101.9 L202.7,101.7 L204.6,101.5 L206.5,101.2 L208.5,101.0 L210.5,100.8 L212.5,100.7 L214.5,100.5 L216.6,100.3 L218.7,100.2 L220.8,100.1 L222.9,100.0 L225.1,99.9 L227.2,99.8 L229.5,99.7 L231.7,99.7 L233.9,99.7 L236.2,99.6 L238.5,99.6 L240.7,99.7 L243.1,99.7 L245.4,99.7 L247.7,99.8 L250.1,99.9 L252.4,100.0 L254.8,100.1 L257.2,100.2 L259.6,100.4 L262.0,100.6 L264.4,100.7 L266.8,100.9 L269.2,101.2 L271.6,101.4 L274.0,101.6 L276.5,101.9 L278.9,102.2 L281.3,102.5 L283.7,102.8 L286.2,103.1" fill="none" stroke="#ff0000" stroke-width="1.0" stroke-linejoin="round"/>
<path d="M286.2,102.2 L284.0,103.1 L281.9,104.0 L279.8,104.9 L277.6,105.7 L275.4,106.6 L273.2,107.4 L271.0,108.2 L268.8,109.0 L266.6,109.8 L264.4,110.6 L262.1,111.3 L259.9,112.0 L257.7,112.8 L255.4,113.5 L253.2,114.1 L250.9,114.8 L248.7,115.4 L246.4,116.1 L244.2,116.7 L241.9,117.3 L239.7,117.8 L237.5,118.4 L235.3,118.9 L233.0,119.4 L230.8,119.9 L228.7,120.4 L226.5,120.8 L224.3,121.3 L222.2,121.7 L220.1,122.1 L218.0,122.4 L215.9,122.8 L213.8,123.1 L211.8,123.4 L209.8,123.7 L207.8,124.0 L205.8,124.2 L203.9,124.4 L202.0,124.6 L200.1,124.8 L198.3,124.9 L196.5,125.1 L194.7,125.2 L192.9,125.3 L191.2,125.3 L189.6,125.4 L187.9,125.4 L186.3,125.4 L184.8,125.4 L183.3,125.4 L181.8,125.4 L180.4,125.3 L179.0,125.2 L177.6,125.1 L176.3,125.0 L175.1,124.9 L173.9,124.7 L172.7,124.6 L171.6,124.4 L170.5,124.2 L169.5,124.0 L168.5,123.7 L167.6,123.5 L166.7,123.2 L165.9,122.9 L165.1,122.7 L164.4,122.4 L163.8,122.0 L163.1,121.7 L162.6,121.4 L162.1,121.0 L161.6,120.7 L161.2,120.3 L160.9,119.9 L160.6,119.6 L160.3,119.2 L160.1,118.8 L160.0,118.4 L159.9,117.9 L159.9,117.5 L159.9,117.1 L160.0,116.7 L160.1,116.2 L160.3,115.8 L160.6,115.3 L160.8,114.9 L161.2,114.4 L161.6,114.0 L162.0,113.5 L162.5,113.1 L163.1,112.6 L163.7,112.2 L164.3,111.7 L165.0,111.3 L165.8,110.8 L166.6,110.4 L167.4,109.9 L168.3,109.5 L169.2,109.0 L170.2,108.6 L171.3,108.1 L172.4,107.7 L173.5,107.3 L174.7,106.9 L175.9,106.5 L177.1,106.1 L178.4,105.7 L179.8,105.3 L181.2,104.9 L182.6,104.5 L184.1,104.1 L185.6,103.8 L187.1,103.4 L188.7,103.1 L190.3,102.8 L192.0,102.5 L193.7,102.2 L195.4,101.9 L197.2,101.6 L199.0,101.3 L200.8,101.0 L202.7,100.8 L204.6,100.6 L206.5,100.3 L208.5,100.1 L210.5,99.9 L212.5,99.8 L214.5,99.6 L216.6,99.4 L218.7,99.3 L220.8,99.2 L222.9,99.1 L225.1,99.0 L227.2,98.9 L229.5,98.8 L231.7,98.8 L233.9,98.8 L236.2,98.7 L238.5,98.7 L240.7,98.8 L243.1,98.8 L245.4,98.8 L247.7,98.9 L250.1,99.0 L252.4,99.1 L254.8,99.2 L257.2,99.3 L259.6,99.5 L262.0,99.7 L264.4,99.8 L266.8,100.0 L269.2,100.3 L271.6,100.5 L274.0,100.7 L276.5,101.0 L278.9,101.3 L281.3,101.6 L283.7,101.9 L286.2,102.2" fill="none" stroke="#ff0000" stroke-width="1.0" stroke-linejoin="round"/>
<path d="M286.2,104.0 L283.7,103.7 L281.3,103.3 L278.9,102.9 L276.5,102.6 L274.2,102.1 L271.8,101.7 L269.5,101.3 L267.2,100.8 L264.8,100.4 L262.6,99.9 L260.3,99.4 L258.0,98.9 L255.8,98.4 L253.6,97.9 L251.4,97.3 L249.3,96.8 L247.2,96.2 L245.1,95.7 L243.0,95.1 L241.0,94.5 L239.0,93.9 L237.0,93.3 L235.0,92.7 L233.1,92.1 L231.3,91.4 L229.4,90.8 L227.6,90.2 L225.8,89.5 L224.1,88.9 L222.4,88.2 L220.7,87.5 L219.1,86.9 L217.5,86.2 L216.0,85.5 L214.5,84.9 L213.0,84.2 L211.6,83.5 L210.2,82.8 L208.9,82.2 L207.6,81.5 L206.3,80.8 L205.1,80.1 L203.9,79.5 L202.8,78.8 L201.7,78.1 L200.7,77.5 L199.7,76.8 L198.7,76.2 L197.8,75.5 L196.9,74.9 L196.1,74.2 L195.3,73.6 L194.6,72.9 L193.9,72.3 L193.2,71.7 L192.6,71.1 L192.1,70.5 L191.6,69.9 L191.1,69.3 L190.7,68.8 L190.3,68.2 L189.9,67.7 L189.6,67.1 L189.4,66.6 L189.1,66.1 L189.0,65.6 L188.8,65.1 L188.7,64.6 L188.7,64.1 L188.7,63.7 L188.7,63.2 L188.8,62.8 L188.9,62.4 L189.0,62.0 L189.2,61.6 L189.5,61.3 L189.7,60.9 L190.0,60.6 L190.4,60.3 L190.8,60.0 L191.2,59.7 L191.6,59.4 L192.1,59.2 L192.6,59.0 L193.2,58.8 L193.8,58.6 L194.4,58.4 L195.1,58.3 L195.7,58.1 L196.5,58.0 L197.2,57.9 L198.0,57.9 L198.8,57.8 L199.6,57.8 L200.5,57.8 L201.4,57.8 L202.3,57.8 L203.3,57.9 L204.3,58.0 L205.3,58.1 L206.3,58.2 L207.4,58.3 L208.4,58.5 L209.5,58.7 L210.7,58.9 L211.8,59.1 L213.0,59.4 L214.2,59.7 L215.4,60.0 L216.6,60.3 L217.8,60.7 L219.1,61.0 L220.4,61.4 L221.7,61.8 L223.0,62.3 L224.3,62.8 L225.7,63.2 L227.0,63.8 L228.4,64.3 L229.8,64.9 L231.2,65.4 L232.6,66.1 L234.0,66.7 L235.4,67.3 L236.9,68.0 L238.3,68.7 L239.8,69.4 L241.2,70.2 L242.7,71.0 L244.2,71.8 L245.7,72.6 L247.1,73.4 L248.6,74.3 L250.1,75.2 L251.6,76.1 L253.1,77.0 L254.6,78.0 L256.1,78.9 L257.6,79.9 L259.1,81.0 L260.5,82.0 L262.0,83.1 L263.5,84.1 L265.0,85.2 L266.5,86.4 L267.9,87.5 L269.4,88.7 L270.8,89.9 L272.3,91.1 L273.7,92.3 L275.2,93.5 L276.6,94.8 L278.0,96.0 L279.4,97.3 L280.8,98.6 L282.1,100.0 L283.5,101.3 L284.8,102.7 L286.2,104.0" fill="none" stroke="#ff0000" stroke-width="1.0" stroke-linejoin="round"/>
<path d="M286.2,103.1 L283.7,102.8 L281.3,102.4 L278.9,102.0 L276.5,101.7 L274.2,101.2 L271.8,100.8 L269.5,100.4 L267.2,99.9 L264.8,99.5 L262.6,99.0 L260.3,98.5 L258.0,98.0 L255.8,97.5 L253.6,97.0 L251.4,96.4 L249.3,95.9 L247.2,95.3 L245.1,94.8 L243.0,94.2 L241.0,93.6 L239.0,93.0 L237.0,92.4 L235.0,91.8 L233.1,91.2 L231.3,90.5 L229.4,89.9 L227.6,89.3 L225.8,88.6 L224.1,88.0 L222.4,87.3 L220.7,86.6 L219.1,86.0 L217.5,85.3 L216.0,84.6 L214.5,84.0 L213.0,83.3 L211.6,82.6 L210.2,81.9 L208.9,81.3 L207.6,80.6 L206.3,79.9 L205.1,79.2 L203.9,78.6 L202.8,77.9 L201.7,77.2 L200.7,76.6 L199.7,75.9 L198.7,75.3 L197.8,74.6 L196.9,74.0 L196.1,73.3 L195.3,72.7 L194.6,72.0 L193.9,71.4 L193.2,70.8 L192.6,70.2 L192.1,69.6 L191.6,69.0 L191.1,68.4 L190.7,67.9 L190.3,67.3 L189.9,66.8 L189.6,66.2 L189.4,65.7 L189.1,65.2 L189.0,64.7 L188.8,64.2 L188.7,63.7 L188.7,63.2 L188.7,62.8 L188.7,62.3 L188.8,61.9 L188.9,61.5 L189.0,61.1 L189.2,60.7 L189.5,60.4 L189.7,60.0 L190.0,59.7 L190.4,59.4 L190.8,59.1 L191.2,58.8 L191.6,58.5 L192.1,58.3 L192.6,58.1 L193.2,57.9 L193.8,57.7 L194.4,57.5 L195.1,57.4 L195.7,57.2 L196.5,57.1 L197.2,57.0 L198.0,57.0 L198.8,56.9 L199.6,56.9 L200.5,56.9 L201.4,56.9 L202.3,56.9 L203.3,57.0 L204.3,57.1 L205.3,57.2 L206.3,57.3 L207.4,57.4 L208.4,57.6 L209.5,57.8 L210.7,58.0 L211.8,58.2 L213.0,58.5 L214.2,58.8 L215.4,59.1 L216.6,59.4 L217.8,59.8 L219.1,60.1 L220.4,60.5 L221.7,60.9 L223.0,61.4 L224.3,61.9 L225.7,62.3 L227.0,62.9 L228.4,63.4 L229.8,64.0 L231.2,64.5 L232.6,65.2 L234.0,65.8 L235.4,66.4 L236.9,67.1 L238.3,67.8 L239.8,68.5 L241.2,69.3 L242.7,70.1 L244.2,70.9 L245.7,71.7 L247.1,72.5 L248.6,73.4 L250.1,74.3 L251.6,75.2 L253.1,76.1 L254.6,77.1 L256.1,78.0 L257.6,79.0 L259.1,80.1 L260.5,81.1 L262.0,82.2 L263.5,83.2 L265.0,84.3 L266.5,85.5 L267.9,86.6 L269.4,87.8 L270.8,89.0 L272.3,90.2 L273.7,91.4 L275.2,92.6 L276.6,93.9 L278.0,95.1 L279.4,96.4 L280.8,97.7 L282.1,99.1 L283.5,100.4 L284.8,101.8 L286.2,103.1" fill="none" stroke="#ff0000" stroke-width="1.0" stroke-linejoin="round"/>
<path d="M286.2,102.2 L283.7,101.9 L281.3,101.5 L278.9,101.1 L276.5,100.8 L274.2,100.3 L271.8,99.9 L269.5,99.5 L267.2,99.0 L264.8,98.6 L262.6,98.1 L260.3,97.6 L258.0,97.1 L255.8,96.6 L253.6,96.1 L251.4,95.5 L249.3,95.0 L247.2,94.4 L245.1,93.9 L243.0,93.3 L241.0,92.7 L239.0,92.1 L237.0,91.5 L235.0,90.9 L233.1,90.3 L231.3,89.6 L229.4,89.0 L227.6,88.4 L225.8,87.7 L224.1,87.1 L222.4,86.4 L220.7,85.7 L219.1,85.1 L217.5,84.4 L216.0,83.7 L214.5,83.1 L213.0,82.4 L211.6,81.7 L210.2,81.0 L208.9,80.4 L207.6,79.7 L206.3,79.0 L205.1,78.3 L203.9,77.7 L202.8,77.0 L201.7,76.3 L200.7,75.7 L199.7,75.0 L198.7,74.4 L197.8,73.7 L196.9,73.1 L196.1,72.4 L195.3,71.8 L194.6,71.1 L193.9,70.5 L193.2,69.9 L192.6,69.3 L192.1,68.7 L191.6,68.1 L191.1,67.5 L190.7,67.0 L190.3,66.4 L189.9,65.9 L189.6,65.3 L189.4,64.8 L189.1,64.3 L189.0,63.8 L188.8,63.3 L188.7,62.8 L188.7,62.3 L188.7,61.9 L188.7,61.4 L188.8,61.0 L188.9,60.6 L189.0,60.2 L189.2,59.8 L189.5,59.5 L189.7,59.1 L190.0,58.8 L190.4,58.5 L190.8,58.2 L191.2,57.9 L191.6,57.6 L192.1,57.4 L192.6,57.2 L193.2,57.0 L193.8,56.8 L194.4,56.6 L195.1,56.5 L195.7,56.3 L196.5,56.2 L197.2,56.1 L198.0,56.1 L198.8,56.0 L199.6,56.0 L200.5,56.0 L201.4,56.0 L202.3,56.0 L203.3,56.1 L204.3,56.2 L205.3,56.3 L206.3,56.4 L207.4,56.5 L208.4,56.7 L209.5,56.9 L210.7,57.1 L211.8,57.3 L213.0,57.6 L214.2,57.9 L215.4,58.2 L216.6,58.5 L217.8,58.9 L219.1,59.2 L220.4,59.6 L221.7,60.0 L223.0,60.5 L224.3,61.0 L225.7,61.4 L227.0,62.0 L228.4,62.5 L229.8,63.1 L231.2,63.6 L232.6,64.3 L234.0,64.9 L235.4,65.5 L236.9,66.2 L238.3,66.9 L239.8,67.6 L241.2,68.4 L242.7,69.2 L244.2,70.0 L245.7,70.8 L247.1,71.6 L248.6,72.5 L250.1,73.4 L251.6,74.3 L253.1,75.2 L254.6,76.2 L256.1,77.1 L257.6,78.1 L259.1,79.2 L260.5,80.2 L262.0,81.3 L263.5,82.3 L265.0,83.4 L266.5,84.6 L267.9,85.7 L269.4,86.9 L270.8,88.1 L272.3,89.3 L273.7,90.5 L275.2,91.7 L276.6,93.0 L278.0,94.2 L279.4,95.5 L280.8,96.8 L282.1,98.2 L283.5,99.5 L284.8,100.9 L286.2,102.2" fill="none" stroke="#ff0000" stroke-width="1.0" stroke-linejoin="round"/>
<path d="M292.2,80.9 L321.0,107.2 L277.5,125.2 L252.8,97.3 Z" fill="none" stroke="#ffff00" stroke-width="1.1" />
<path d="M296.0,119.0 Q302.0,130.0 306.0,147.0" fill="none" stroke="#00d000" stroke-width="1.1" stroke-dasharray="3 1.5"/>
<path d="M306.0,156.0 Q295.0,162.0 286.5,172.7" fill="none" stroke="#00e000" stroke-width="1.6"/>
<path d="M286.5,173.0 Q286.0,192.0 292.5,205.0" fill="none" stroke="#00c000" stroke-width="1.1" stroke-dasharray="1.5 2.5"/>
<path d="M292.5,205.0 Q322.5,253.7 366.6,330.0" fill="none" stroke="#00c000" stroke-width="1.1"/>
<ellipse cx="286.7" cy="102.5" rx="25" ry="17.5" fill="url(#gBall)"/>
<line x1="296.5" y1="84.0" x2="296.5" y2="120.0" stroke="#b4d4f4" stroke-width="1.2" />
<path d="M283.0 100.0 L265.0 109.5" stroke="#ffff80" stroke-width="1.2" stroke-dasharray="1.5 2"/></svg><!--/SCENE-->
<!--ICONS1--><svg class="a" style="left:0;top:0" width="808" height="609" viewBox="0 0 808 609">
<g shape-rendering="crispEdges">
<!-- separators main toolbar -->
<rect x="111" y="52" width="1" height="26" fill="#e4e4e4"/>
<rect x="202" y="52" width="1" height="26" fill="#a0a0a0"/><rect x="203" y="52" width="1" height="26" fill="#fff"/>
<rect x="355" y="52" width="1" height="26" fill="#a0a0a0"/><rect x="356" y="52" width="1" height="26" fill="#fff"/>
<rect x="479" y="52" width="1" height="26" fill="#a0a0a0"/><rect x="480" y="52" width="1" height="26" fill="#fff"/>
<!-- new doc -->
<path d="M16.5 58.5 H23.5 L26.5 61.5 V70.5 H16.5 Z" fill="#fff" stroke="#000" stroke-width="1"/>
<rect x="23" y="59" width="1" height="3" fill="#000"/><rect x="23" y="61" width="3" height="1" fill="#000"/>
<!-- open folder -->
<path d="M44 61 H48 L49 62 H55 V65 H44 Z" fill="#ffff00"/>
<path d="M44 61 H48 L49 62 H55 V64" fill="none" stroke="#000" stroke-width="1"/>
<path d="M44.5 61 V70.5 H55" fill="none" stroke="#000"/>
<path d="M45 70 L48 65 H60 L56 70 Z" fill="#808000" stroke="#000" stroke-width="1"/>
<path d="M52 60 Q55 57 58 60" fill="none" stroke="#000" stroke-width="1"/>
<path d="M57 59 H59 V62 Z" fill="#000"/>
<!-- dropdown -->
<path d="M70 63 H77 L73.5 67 Z" fill="#000"/>
<!-- save -->
<rect x="88" y="58" width="14" height="14" fill="#000"/>
<rect x="89" y="59" width="12" height="7" fill="#808000"/>
<rect x="91" y="59" width="8" height="5" fill="#fff"/>
<rect x="91" y="66" width="8" height="5" fill="#000"/>
<rect x="89" y="66" width="1" height="5" fill="#808000"/><rect x="100" y="66" width="1" height="5" fill="#808000"/>
<rect x="96" y="67" width="2" height="3" fill="#fff"/>
<rect x="100" y="59" width="1" height="1" fill="#fff"/>
<!-- copy -->
<path d="M119.5 58.5 H124 L126.5 61 V68.5 H119.5 Z" fill="#fff" stroke="#000"/>
<rect x="121" y="61" width="3" height="1" fill="#000"/><rect x="121" y="63" width="4" height="1" fill="#000"/><rect x="121" y="65" width="4" height="1" fill="#000"/>
<path d="M125.5 61.5 H130 L133.5 65 V70.5 H125.5 Z" fill="#fff" stroke="#000080"/>
<rect x="127" y="65" width="5" height="1" fill="#000080"/><rect x="127" y="67" width="5" height="1" fill="#000080"/>
<!-- scissors -->
<path d="M153 58 V61 L155 64 H156 L158 61 V58" fill="none" stroke="#000" stroke-width="1"/>
<rect x="155" y="64" width="1" height="2" fill="#000"/>
<path d="M152 67.5 H153.5 V66 H155 V65 M156 65 V66 H158 V67" fill="none" stroke="#000080" stroke-width="1"/>
<rect x="151.5" y="67.5" width="3" height="4" fill="#e0dcc0" stroke="#000080" stroke-width="1"/>
<rect x="156.5" y="66.5" width="3" height="4" fill="#e0dcc0" stroke="#000080" stroke-width="1"/>
<!-- paste -->
<rect x="177.5" y="60.5" width="11" height="11" fill="#808000" stroke="#000"/>
<rect x="181" y="59" width="5" height="3" fill="#ffff00" stroke="#000" stroke-width="0.8"/>
<rect x="180" y="61" width="7" height="1" fill="#000"/>
<path d="M183.5 64.5 H190 L192.5 67 V71.5 H183.5 Z" fill="#fff" stroke="#000080" stroke-width="1.2"/>
<rect x="185" y="67" width="3" height="1" fill="#000080"/><rect x="185" y="69" width="6" height="1" fill="#000080"/>
</g>
<!-- zoom in/out -->
<g shape-rendering="auto">
<circle cx="219.7" cy="62.2" r="5" fill="#fff" stroke="#000" stroke-width="1.3"/>
<path d="M217 62.2 H222.4 M219.7 59.5 V64.9" stroke="#000" stroke-width="1.8"/>
<path d="M223.5 66 L229 71.5" stroke="#000" stroke-width="2.3"/>
<circle cx="248.6" cy="62.2" r="5" fill="#fff" stroke="#000" stroke-width="1.3"/>
<path d="M245.9 62.2 H251.3" stroke="#000" stroke-width="1.8"/>
<path d="M252.4 66 L257.9 71.5" stroke="#000" stroke-width="2.3"/>
<!-- pressed button -->
<rect x="266.5" y="51.5" width="28" height="27" rx="3" ry="3" fill="url(#gBtn)" stroke="#8a8a8a"/>
</g>
<defs>
<linearGradient id="gBtn" x1="0" y1="0" x2="0" y2="1"><stop offset="0" stop-color="#e6e6e6"/><stop offset="0.45" stop-color="#e0e0e0"/><stop offset="0.5" stop-color="#d6d6d6"/><stop offset="1" stop-color="#dcdcdc"/></linearGradient>
</defs>
<g shape-rendering="crispEdges">
<rect x="279" y="58" width="1" height="14" fill="#000"/>
<rect x="274" y="65" width="14" height="1" fill="#000"/>
<path d="M276.5 61 L279.5 57.5 L282.5 61" fill="none" stroke="#000" stroke-width="1"/>
<path d="M285 62 L288.5 65.5 L285 69" fill="none" stroke="#000" stroke-width="1"/>
<!-- Full -->
<rect x="302" y="58" width="15" height="13" fill="#00ffff"/>
<path d="M304 59 H315 L316 60 V69 L315 70 H304 L303 69 V60 Z" fill="#000080"/>
<path d="M304.5 61.5 V67.5 M304.5 61.5 H307 M304.5 64 H306.5 M308.5 63.5 V67 H311 V63.5 M312.5 61.5 V67.5 H313.5 M314.5 61.5 V67.5 H315.5" stroke="#fff" stroke-width="1" fill="none"/>
<!-- monitor -->
<rect x="332" y="58" width="1" height="11" fill="#a0a0a0"/>
<rect x="333" y="59" width="10" height="9" fill="#00ffff"/>
<rect x="344" y="57" width="1" height="13" fill="#808080"/>
<rect x="331" y="70" width="14" height="1" fill="#909090"/>
<rect x="336" y="71" width="5" height="1" fill="#909090"/>
<rect x="336" y="61" width="1" height="1" fill="#000"/><rect x="337" y="62" width="2" height="1" fill="#000"/><rect x="338" y="63" width="3" height="1" fill="#c00000"/>
<rect x="337" y="64" width="4" height="1" fill="#000"/><rect x="341" y="63" width="2" height="2" fill="#008000"/><rect x="339" y="65" width="2" height="1" fill="#ffff00"/>
<rect x="335" y="62" width="1" height="1" fill="#0000ff"/><rect x="340" y="62" width="2" height="1" fill="#c00000"/>
<!-- tree -->
<rect x="368" y="60" width="3" height="3" fill="#000080"/><rect x="369" y="61" width="1" height="1" fill="#8080ff"/><rect x="372" y="61" width="2" height="1" fill="#000"/>
<rect x="375" y="65" width="3" height="3" fill="#000080"/><rect x="376" y="66" width="1" height="1" fill="#8080ff"/><rect x="379" y="66" width="2" height="1" fill="#000"/>
<rect x="370" y="69" width="3" height="3" fill="#000080"/><rect x="371" y="70" width="1" height="1" fill="#8080ff"/><rect x="374" y="70" width="2" height="1" fill="#000"/>
<!-- i -->
<rect x="403" y="59" width="2" height="1" fill="#000080"/><rect x="402" y="60" width="4" height="1" fill="#000080"/><rect x="403" y="61" width="2" height="1" fill="#000080"/>
<rect x="402" y="63" width="4" height="1" fill="#000080"/><rect x="403" y="63" width="3" height="6" fill="#000080"/><rect x="402" y="69" width="5" height="1.5" fill="#000080"/>
<!-- funnel -->
<rect x="430" y="58" width="10" height="1.2" fill="#0000ff"/>
<path d="M430.5 59.5 H439.5 L437 63.5 V69.5 H434.5 V63.5 Z" fill="#a8a8a8" stroke="#000080" stroke-width="1" shape-rendering="auto"/>
<rect x="435" y="60" width="2" height="2" fill="#e8e8e8"/><rect x="435" y="65" width="1" height="3" fill="#606060"/>
<rect x="434" y="69" width="4.5" height="2.5" fill="#000080"/><rect x="435" y="70" width="2" height="1" fill="#808080"/>
<ellipse cx="428" cy="65.5" rx="2" ry="1.6" fill="#ffff00" stroke="#000080" stroke-width="1" shape-rendering="auto"/>
<rect x="430" y="65" width="5" height="1.2" fill="#000080"/><rect x="430" y="66.5" width="4" height="1" fill="#a0a0a0"/>
<!-- fx -->
<text x="455" y="67.5" font-family="Liberation Serif" font-style="italic" font-weight="bold" font-size="12.5" fill="#000" stroke="#000" stroke-width="0.4" shape-rendering="auto">f</text>
<text x="461" y="68.5" font-family="Liberation Serif" font-style="italic" font-weight="bold" font-size="9.5" fill="#000" stroke="#000" stroke-width="0.3" shape-rendering="auto">x</text>
<!-- ff -->
<path d="M494 58.5 L499.5 65 L494 71.5 Z M499.5 58.5 L505.5 65 L499.5 71.5 Z" fill="#000080" shape-rendering="auto"/>
<!-- stop -->
<rect x="524" y="61" width="8" height="8" fill="#000080"/>
<!-- rotate -->
<rect x="555" y="57" width="2" height="16" fill="#000"/>
<path d="M554 59.5 Q550.5 61.5 553 64.5 Q563 65 562.5 66 Q561.5 68.5 551 68" fill="none" stroke="#0000ff" stroke-width="1.3" shape-rendering="auto"/>
<path d="M551.5 62 L554 58.5 L556 61.5" fill="none" stroke="#0000ff" stroke-width="1.2" shape-rendering="auto"/>
</g>
</svg>
<!--/ICONS1-->
<!--ICONS2--><svg class="a" style="left:0;top:0" width="808" height="609" viewBox="0 0 808 609">
<g font-family="Liberation Sans">
<text x="17.5" y="120" font-size="11" fill="#800080">St</text>
<text x="40.5" y="120" font-size="11" fill="#800080">St</text>
<text x="62" y="120.5" font-size="8.5" fill="#000080" textLength="14.5" lengthAdjust="spacingAndGlyphs" stroke="#000080" stroke-width="0.25">12.3</text>
</g>
<g fill="none" stroke="#000" stroke-width="1">
<circle cx="92" cy="117" r="3.6" fill="#000" stroke="none"/>
<path d="M108.5 110.5 L121.5 123" stroke-width="1.5"/>
<path d="M132.5 119.6 L140.3 112.5 L142.5 121 Z" stroke-linejoin="round"/>
<path d="M154.5 117.5 L167 110.8 L168 117 L156 123 Z"/>
<path d="M181 110.3 H186.5 L190.5 114 V119.8 L186.5 123.5 H181 L177 119.8 V114 Z"/>
<path d="M202.5 112 V121.5 Q207 124.5 211.5 121.5 V112 Q207 109 202.5 112 Q207 114.5 211.5 112"/>
<path d="M223.5 114.5 H232.5 V123.5 H223.5 Z M223.5 114.5 L227 110.5 H236.5 V119.5 L232.5 123.5 M232.5 114.5 L236.5 110.5"/>
<path d="M253.2 110.3 L246.5 119.5 M253.2 110.3 L260 119.5"/>
<ellipse cx="253.2" cy="119.5" rx="6.8" ry="2.3"/>
<path d="M248 117.5 Q253 119 258.5 117.5"/>
<path d="M276.4 110.3 L269.3 120.3 L275.7 124.7 L283.9 120.3 Z M276.4 110.3 V124.7 M269.3 120.3 L276.4 117.5" />
<path d="M295.5 111.5 H297.5 L304.5 118.2 L300.8 122.5 H292.5 V120 L294 116.5 Z M297.5 111.5 L297 118.2 H304.5 M297 118.2 L292.5 122"/>
<path d="M321.9 110.6 L315.6 121.1 L318.5 123.1 H325.9 L328.4 120 Z M321.9 110.6 L322.5 118.2 L315.6 121.1 M322.5 118.2 L328.4 120"/>
<rect x="340.5" y="111.5" width="9" height="11"/>
<path d="M362 112.5 L366.5 109.5 L372.5 112.5 V122.5 H362 Z M366.5 109.5 V118.5 M362 122.5 L366.5 118.5 L372.5 122.5 M362 112.5 H372.5"/>
<path d="M385.5 113.5 L388.5 110.5 H396.5 V119.5 L393.5 122.5 H385.5 Z M388.5 110.5 V119.5 H396.5 M385.5 113.5 H393.5 V122.5"/>
</g>
<circle cx="413.8" cy="116.6" r="6.3" fill="#000"/>
<ellipse cx="436.9" cy="116.6" rx="8" ry="4.8" fill="#000"/>
</svg>
<!--/ICONS2-->
<!--SPIN--><style>
.spin{position:absolute;width:49px;height:19px;border-top:1px solid #a0a0a0;border-left:1px solid #a0a0a0;border-right:1px solid #fff;border-bottom:1px solid #fff;background:#fff}
.spin .in{position:absolute;left:0;top:0;width:47px;height:17px;border-top:1px solid #696969;border-left:1px solid #696969;border-right:1px solid #e3e3e3;border-bottom:1px solid #e3e3e3}
.spin .v{position:absolute;left:1px;top:1px;font-size:12.5px;line-height:1}
.spin .b{position:absolute;left:31px;width:16px;height:8px;background:#ebebeb;border-top:1px solid #f0f0f0;border-left:1px solid #f0f0f0;border-right:1px solid #696969;border-bottom:1px solid #696969;box-shadow:inset -1px -1px 0 #a0a0a0}
.spin .b.u{top:0}
.spin .b.d{top:8px;height:8px}
.spin .b i{position:absolute;left:6px;top:2px;width:0;height:0;border-left:2px solid transparent;border-right:2px solid transparent}
.spin .b.u i{border-bottom:2px solid #000}
.spin .b.d i{border-top:2px solid #000;top:3px}
</style>
<div class="t" style="left:587px;top:113px;font-size:12px">X</div>
<div class="t" style="left:657px;top:113px;font-size:12px">Y</div>
<div class="t" style="left:727px;top:113px;font-size:12px">Z</div>
<div class="spin" style="left:605px;top:111px"><div class="in"><div class="v">0.0</div><div class="b u"><i></i></div><div class="b d"><i></i></div></div></div>
<div class="spin" style="left:675px;top:111px"><div class="in"><div class="v">0.0</div><div class="b u"><i></i></div><div class="b d"><i></i></div></div></div>
<div class="spin" style="left:745px;top:111px"><div class="in"><div class="v">0.0</div><div class="b u"><i></i></div><div class="b d"><i></i></div></div></div>
<!--/SPIN-->
<!--LIST--><div class="a" style="left:601px;top:139px;width:197px;height:23px;background:linear-gradient(#ffffff 0,#ffffff 10px,#f3f4f6 11px,#eef0f2 22px,#e2e3e6 23px)"></div>
<div class="a" style="left:601px;top:162px;width:197px;height:1px;background:#d5d5d5"></div>
<div class="a" style="left:681px;top:140px;width:1px;height:22px;background:#e3e4e6"></div>
<div class="a" style="left:682px;top:140px;width:1px;height:22px;background:#fff"></div>
<div class="t" style="left:608px;top:147px;font-size:11px;letter-spacing:-0.3px">Name</div>
<div class="t" style="left:688px;top:147px;font-size:11px;letter-spacing:-0.3px">Expression</div>
<div class="t" style="left:624px;top:168px;font-size:11px;letter-spacing:-0.3px">Yx0</div>
<div class="t" style="left:624px;top:185px;font-size:11px;letter-spacing:-0.3px">Flower0</div>
<div class="t" style="left:624px;top:202px;font-size:11px;letter-spacing:-0.3px">Circle0</div>
<div class="t" style="left:688px;top:168px;font-size:11px;letter-spacing:-0.3px">Y=X^3</div>
<div class="t" style="left:688px;top:185px;font-size:11px;letter-spacing:-0.3px">R=5*SIN(4*T)</div>
<div class="t" style="left:688px;top:202px;font-size:11px;letter-spacing:-0.3px">(0,0,0,0.99,0)</div>
<svg class="a" style="left:600px;top:160px" width="30" height="60" viewBox="600 160 30 60">
<text x="606" y="176" font-family="Liberation Serif" font-style="italic" font-weight="bold" font-size="14.5">Y</text>
<text x="615.5" y="178" font-family="Liberation Serif" font-weight="bold" font-size="9">x</text>
<g fill="none" stroke="#800000" stroke-width="1.1">
<path d="M613.7 185 Q611.5 182 607.5 182.5 Q607 186 610 188.5 Q607 191 607.5 194.5 Q611.5 195 613.7 192 Q616 195 620 194.5 Q620.5 191 617.5 188.5 Q620.5 186 620 182.5 Q616 182 613.7 185 Z"/>
<path d="M613.7 185 V192 M610 188.5 H617.5"/>
</g>
<path d="M611 199.5 H616.5 L620.5 203.5 V209 L616.5 213 H611 L607 209 V203.5 Z" fill="none" stroke="#000" stroke-width="1"/>
</svg>
<!-- h scrollbar -->
<div class="a" style="left:601px;top:340px;width:197px;height:17px;background:#f0f0f0;border-top:1px solid #e9e9e9"></div>
<div class="a" style="left:620px;top:341px;width:157px;height:14px;border:1px solid #989898;border-radius:2px;background:linear-gradient(#f4f4f4,#e9e9e9 50%,#d9d9d9 51%,#cfcfcf)"></div>
<div class="a" style="left:694px;top:345px;width:1px;height:6px;background:#464646;box-shadow:2px 0 0 #464646,4px 0 0 #464646"></div>
<svg class="a" style="left:601px;top:340px" width="197" height="17" viewBox="601 340 197 17">
<path d="M608 348 L612 344.5 V351.5 Z" fill="#404040"/>
<path d="M791 348 L787 344.5 V351.5 Z" fill="#404040"/>
</svg>
<!--/LIST-->
<!--BOTTOM--><!-- splitter under view -->
<div class="a" style="left:8px;top:468px;width:590px;height:1px;background:#fff"></div>
<div class="a" style="left:597px;top:138px;width:1px;height:331px;background:#fff"></div>
<div class="a" style="left:8px;top:471px;width:589px;height:1px;background:#a0a0a0"></div>
<div class="a" style="left:8px;top:472px;width:589px;height:1px;background:#fff"></div>
<!-- left side buttons -->
<div class="a" style="left:8px;top:474px;width:58px;height:34px;border:1px solid #8a8a8a;border-radius:3px;background:linear-gradient(#f2f2f2,#e9e9e9 45%,#dcdcdc 50%,#d6d6d6 100%)"></div>
<div class="t" style="left:12px;top:494px;font-size:11.5px">MathScript</div>
<div class="t" style="left:20px;top:530px;font-size:11.5px">Pascal</div>
<div class="t" style="left:27px;top:566px;font-size:11.5px">C++</div>
<svg class="a" style="left:0;top:460px" width="70" height="110" viewBox="0 460 70 110">
<g shape-rendering="crispEdges">
<path d="M30 479 H31 V481 H33 V479 H35 V484 H30 Z" fill="#808080"/>
<path d="M34 484 L42 491.5" stroke="#8c8c8c" stroke-width="2.2" shape-rendering="auto"/>
<path d="M34.5 483.5 L42.5 491" stroke="#d0d0d0" stroke-width="0.6" stroke-dasharray="1 1" shape-rendering="auto"/>
<path d="M36 477 H40 V478 H42 V479 H44 V481 H46 V483 H44 V485 H42 V483 H40 V481 H38 V479 H36 Z" fill="#8f8fa0"/>
<path d="M38 478 H40 V479 H42 V481 H45 V483 H42 V482 H39 V480 H38 Z" fill="#808000"/>
<rect x="42" y="481" width="2" height="3" fill="#808000"/>
</g>
<path d="M32 490.5 L39.5 482.5" stroke="#a00000" stroke-width="1.8" stroke-dasharray="1.2 0.6"/>
<!-- pascal -->
<rect x="29" y="512" width="16" height="16" fill="#fff"/>
<rect x="29" y="512" width="4" height="16" fill="#000"/>
<rect x="29" y="512" width="16" height="1.5" fill="#000"/>
<rect x="30" y="518" width="1.5" height="3" fill="#fff"/>
<path d="M35 517 L38 514 L40 516 L43 513" stroke="#000" stroke-width="1" fill="none"/>
<circle cx="37" cy="522" r="2" fill="#0000ff"/><circle cx="43.5" cy="523" r="1.6" fill="#00a0ff"/>
<path d="M33 525 H38 V528 H33 Z" fill="#800080"/>
<rect x="39" y="527" width="3" height="1" fill="#ff0000"/>
<!-- c++ -->
<g shape-rendering="crispEdges">
<rect x="29" y="552" width="2" height="12" fill="#000080"/>
<rect x="31" y="563" width="13" height="1" fill="#000080"/>
<rect x="31" y="550" width="2" height="3" fill="#000080"/>
<rect x="35" y="550" width="2" height="13" fill="#000080"/>
<rect x="38" y="551" width="2" height="12" fill="#000080"/>
<rect x="40" y="557" width="4" height="6" fill="#000080"/><rect x="41" y="558" width="2" height="2" fill="#e0e0e0"/><rect x="41" y="561" width="2" height="1" fill="#fff"/>
<rect x="44" y="557" width="1.5" height="7" fill="#000080"/>
</g>
<path d="M35.5 554 Q31.5 553 31.5 558 Q31.8 562.5 36.5 562 Q38.5 561.5 38.5 559.5" fill="none" stroke="#ffff00" stroke-width="2.6"/>
<path d="M35.5 554 Q31.5 553 31.5 558 Q31.8 562.5 36.5 562 Q38.5 561.5 38.5 559.5" fill="none" stroke="#a00000" stroke-width="0.8" stroke-dasharray="1 1.5"/>
<path d="M36.5 556 H42.5 M39.5 553 V559" stroke="#ffff00" stroke-width="1.7"/>
<path d="M41 551 H46.5 M43.7 548.5 V553.5" stroke="#ffff00" stroke-width="1.7"/>
<path d="M37 556 H42 M41.5 551 H46" stroke="#a00000" stroke-width="0.5" stroke-dasharray="1 1.5"/>
</svg>
<!-- bottom toolbar -->
<svg class="a" style="left:68px;top:472px" width="530" height="28" viewBox="68 472 530 28">
<path d="M74 478 L81 484 L74 490 Z" fill="#000080"/>
<rect x="98" y="480" width="8" height="8" fill="#000080"/>
<rect x="116" y="475" width="1" height="18" fill="#a0a0a0"/><rect x="117" y="475" width="1" height="18" fill="#fff"/>
<g shape-rendering="crispEdges">
<path d="M125.5 477.5 H130 L132.5 480 V486.5 H125.5 Z" fill="#fff" stroke="#000"/>
<rect x="127" y="480" width="3" height="1" fill="#000"/><rect x="127" y="482" width="4" height="1" fill="#000"/>
<path d="M131.5 481.5 H136 L139.5 485 V490.5 H131.5 Z" fill="#fff" stroke="#000080"/>
<rect x="133" y="485" width="5" height="1" fill="#000080"/><rect x="133" y="487" width="5" height="1" fill="#000080"/>
</g>
<path d="M125 490 L134 482.5" stroke="#ff0000" stroke-width="1.5"/>
<path d="M152 484 Q155.5 479.5 159.5 481 Q162.5 483 160 487" fill="none" stroke="#000080" stroke-width="1.6"/>
<path d="M150 481 L150.5 486.5 L155.5 485 Z" fill="#000080"/>
<circle cx="179.3" cy="483.8" r="5" fill="#ff0000"/>
<g shape-rendering="crispEdges">
<rect x="197" y="477" width="11" height="9" fill="#fff" stroke="#000"/>
<rect x="199" y="479" width="7" height="1" fill="#000"/><rect x="199" y="481" width="7" height="1" fill="#000"/><rect x="199" y="483" width="7" height="1" fill="#000"/>
<path d="M194.5 485.5 H210 V490.5 H194.5 Z" fill="#ffff00" stroke="#000"/>
<path d="M196 487 H209 M196 489 H209" stroke="#808000" stroke-width="0.8" stroke-dasharray="1 1"/>
<path d="M195 481 H197 V486" fill="none" stroke="#000"/>
</g>
<rect x="216" y="475" width="1" height="18" fill="#a0a0a0"/><rect x="217" y="475" width="1" height="18" fill="#fff"/>
<g shape-rendering="crispEdges">
<rect x="226" y="478" width="14" height="12" fill="#00ffff"/><rect x="227" y="479" width="12" height="10" fill="#000080"/>
<rect x="249" y="483" width="14" height="7" fill="#00ffff"/><rect x="250" y="484" width="12" height="5" fill="#000080"/>
<rect x="272" y="488" width="14" height="2" fill="#00ffff"/>
</g>
<circle cx="302.1" cy="484" r="7.2" fill="#000080"/>
<rect x="300.8" y="479" width="2.6" height="2.4" fill="#fff"/>
<path d="M299.5 482.8 H303.4 V487.5 H305 V489 H299.5 V487.5 H301 V484.2 H299.5 Z" fill="#fff"/>
<circle cx="325.2" cy="484" r="7.2" fill="#008000"/>
<path d="M322 481.5 Q322.3 478.5 325.3 478.5 Q328.5 478.6 328.5 481.3 Q328.3 483.2 326.5 484 Q325.8 484.4 325.8 485.7 H324 Q323.8 483.5 325.5 482.6 Q326.5 482 326.4 481.2 Q326.2 480.3 325.2 480.3 Q324.1 480.3 324 481.7 Z" fill="#fff"/>
<rect x="323.9" y="487" width="2.2" height="2.2" fill="#fff"/>
</svg>
<!-- code editor -->
<div class="a" style="left:68px;top:500px;width:529px;height:83px;background:#fff;border-top:2px solid #a0a0a0;border-left:2px solid #a0a0a0"></div>
<div class="a" style="left:69px;top:501px;width:1px;height:82px;background:#696969"></div>
<div class="a" style="left:69px;top:501px;width:528px;height:1px;background:#696969"></div>
<div class="a" style="left:582px;top:502px;width:15px;height:81px;background:#f0f0f0;border-left:1px solid #e6e6e6"></div>
<div class="a" style="left:583px;top:519px;width:14px;height:15px;border:1px solid #9a9a9a;border-radius:2px;background:linear-gradient(90deg,#f4f4f4,#e2e2e2 50%,#d4d4d4)"></div>
<svg class="a" style="left:582px;top:502px" width="16" height="82" viewBox="582 502 16 82">
<path d="M586 513.5 L589.5 510 L593 513.5 Z" fill="#404040"/>
<path d="M586 573 L589.5 576.5 L593 573 Z" fill="#404040"/>
</svg>
<div class="a" style="left:68px;top:583px;width:529px;height:2px;background:#f0f0f0"></div>
<div class="a" style="left:68px;top:585px;width:529px;height:1px;background:#9a9a9a"></div>
<div class="a" style="left:68px;top:586px;width:529px;height:1px;background:#fff"></div>
<div class="a" style="left:68px;top:587px;width:529px;height:13px;background:#eeebea;border-left:1px solid #fff"></div>
<div class="a" style="left:583px;top:588px;width:1px;height:12px;background:#d2cfce"></div>
<svg class="a" style="left:585px;top:588px" width="12" height="12" viewBox="585 588 12 12" shape-rendering="crispEdges">
<rect x="594" y="594" width="1" height="2" fill="#8a8a8a"/><rect x="591" y="597" width="1" height="2" fill="#8a8a8a"/><rect x="594" y="597" width="1" height="2" fill="#8a8a8a"/>
<rect x="595" y="593" width="1" height="1" fill="#fff"/><rect x="592" y="596" width="1" height="1" fill="#fff"/><rect x="595" y="596" width="1" height="1" fill="#fff"/><rect x="596" y="590" width="1" height="1" fill="#fff"/>
</svg>
<pre class="a" id="code" style="left:80px;top:503px;font-family:'Liberation Mono',monospace;font-size:13.33px;line-height:16px;color:#000">Yx0.VX1 = 2;
Circle0.A = 0;
Flower0.VX1 = 180;
<span style="color:#0000ff">var</span> Time;
Time=0;</pre>
<!-- right panel lower -->
<div class="a" style="left:601px;top:362px;width:198px;height:1px;background:#fff"></div>
<div class="a" style="left:601px;top:363px;width:23px;height:20px;border:1px solid #8a8a8a;border-radius:3px;background:linear-gradient(#e9e9e9,#e2e2e2 45%,#d8d8d8 50%,#dadada)"></div>
<div class="a" style="left:649px;top:364px;width:1px;height:18px;background:#a0a0a0"></div>
<div class="a" style="left:650px;top:364px;width:1px;height:18px;background:#fff"></div>
<svg class="a" style="left:600px;top:360px" width="80" height="28" viewBox="600 360 80 28">
<g shape-rendering="crispEdges">
<rect x="606.5" y="366.5" width="6" height="6" fill="#fff" stroke="#808080"/><rect x="608" y="369" width="3" height="1" fill="#000"/><rect x="609" y="368" width="1" height="3" fill="#000"/>
<rect x="606.5" y="374.5" width="6" height="6" fill="#fff" stroke="#000"/><rect x="608" y="377" width="3" height="1" fill="#000"/><rect x="609" y="376" width="1" height="3" fill="#000"/>
<rect x="609" y="373" width="1" height="1" fill="#808080"/>
<rect x="614" y="367" width="4" height="1" fill="#000"/><rect x="614" y="369" width="6" height="1" fill="#a0a0a0"/><rect x="614" y="371" width="6" height="1" fill="#a0a0a0"/><rect x="614" y="373" width="6" height="1" fill="#a0a0a0"/>
<rect x="614" y="377" width="4" height="1" fill="#000"/><rect x="614" y="379" width="6" height="1" fill="#a0a0a0"/>
</g>
<text x="630" y="372" font-family="Liberation Mono" font-weight="bold" font-size="8.5">A</text>
<text x="630" y="380" font-family="Liberation Mono" font-weight="bold" font-size="8.5">Z</text>
<path d="M640.5 365 V367 M640.5 368.5 V370 M640.5 371 V377" stroke="#000080" stroke-width="1"/>
<path d="M638 376 H643 L640.5 380 Z" fill="#000080"/>
<g shape-rendering="crispEdges">
<rect x="657.5" y="367.5" width="13" height="11" fill="none" stroke="#a0a0a0"/>
<rect x="658.5" y="368.5" width="11" height="1" fill="#b0b0b0"/>
<path d="M659.5 377.5 V371.5 H663.5 L664.5 370.5 H667.5 V377.5 Z" fill="none" stroke="#a0a0a0"/>
<rect x="660" y="374" width="2" height="1" fill="#a0a0a0"/>
</g>
</svg>
<div class="a" style="left:600px;top:388px;width:200px;height:151px;background:#fff;border:1px solid #a0a0a0;border-top:2px solid #a0a0a0"></div>
<div class="a" style="left:600px;top:542px;width:200px;height:59px;background:#f0f0f0;border:1px solid #a0a0a0;border-top:2px solid #a0a0a0"></div>
<!--/BOTTOM-->
<!--TITLE--><div class="a" style="left:710px;top:10px;width:28px;height:15px;border:1px solid #8aa3c0;border-radius:3px;background:linear-gradient(#cfdff0 0,#c3d6ec 50%,#aac4e0 51%,#b5cde6 100%)"></div>
<div class="a" style="left:740px;top:10px;width:28px;height:15px;border:1px solid #5f7894;border-radius:3px;background:linear-gradient(#d3e2f2 0,#c6d9ee 50%,#a9c3e0 51%,#bcd2ea 100%)"></div>
<div class="a" style="left:770px;top:10px;width:28px;height:15px;border:1px solid #5a1c1c;border-radius:3px;background:linear-gradient(#e8a898 0,#dc8a74 45%,#c8452a 52%,#cf6a52 100%)"></div>
<svg class="a" style="left:700px;top:5px" width="108" height="25" viewBox="700 5 108 25">
<rect x="718.5" y="17.5" width="10" height="4" rx="1.5" fill="#e8e8e8" stroke="#3c3c3c" stroke-width="1"/>
<rect x="748.5" y="13.5" width="10" height="8" rx="1" fill="#f4f4f4" stroke="#3c3c3c" stroke-width="1"/>
<rect x="751" y="16" width="5" height="3" fill="#5d7a9e" stroke="#2c3c50" stroke-width="0.6"/>
<path d="M779.5 14 L788.5 21 M788.5 14 L779.5 21" stroke="#3a3a3a" stroke-width="4.2" stroke-linecap="butt"/>
<path d="M780 14.4 L788 20.6 M788 14.4 L780 20.6" stroke="#f4f4f4" stroke-width="2.6" stroke-linecap="butt"/>
</svg>
<svg class="a" style="left:8px;top:8px" width="20" height="16" viewBox="8 8 20 16">
<g shape-rendering="crispEdges">
<path d="M14 11 L18 11 L18 19 L11 19 L11 18 Z" fill="#000"/>
<path d="M14.5 12 L17 12 L17 18 L12 18 Z" fill="#ff00ff"/>
<rect x="12" y="17" width="4" height="1" fill="#800080"/>
<rect x="18" y="10" width="5" height="4" fill="#000"/>
<rect x="19" y="10" width="4" height="3" fill="#00ff00"/>
<rect x="17" y="14" width="8" height="8" fill="#000"/>
<rect x="18" y="15" width="6" height="5" fill="#ff0000"/>
<rect x="17" y="16" width="5" height="6" fill="#800000"/>
<rect x="22" y="16" width="2" height="5" fill="#ff0000"/>
</g>
</svg>
<!--/TITLE-->
<!--WM--><svg class="a" style="left:40px;top:66px" width="160" height="50" viewBox="40 66 160 50">
<text x="55" y="91" font-family="Liberation Serif" font-weight="bold" font-size="20" textLength="119" lengthAdjust="spacingAndGlyphs" fill="rgba(255,255,255,0.6)" stroke="rgba(160,160,160,0.28)" stroke-width="0.8">SOFTPEDIA</text>
<text x="180" y="79" font-family="Liberation Sans" font-size="5" fill="rgba(170,170,170,0.35)">TM</text>
<text x="75" y="111" font-family="Liberation Sans" font-style="italic" font-weight="bold" font-size="11" textLength="83" lengthAdjust="spacingAndGlyphs" fill="rgba(255,255,255,0.5)" stroke="rgba(160,160,160,0.25)" stroke-width="0.6">www.softpedia.com</text>
</svg>
<!--/WM-->
</body></html>
